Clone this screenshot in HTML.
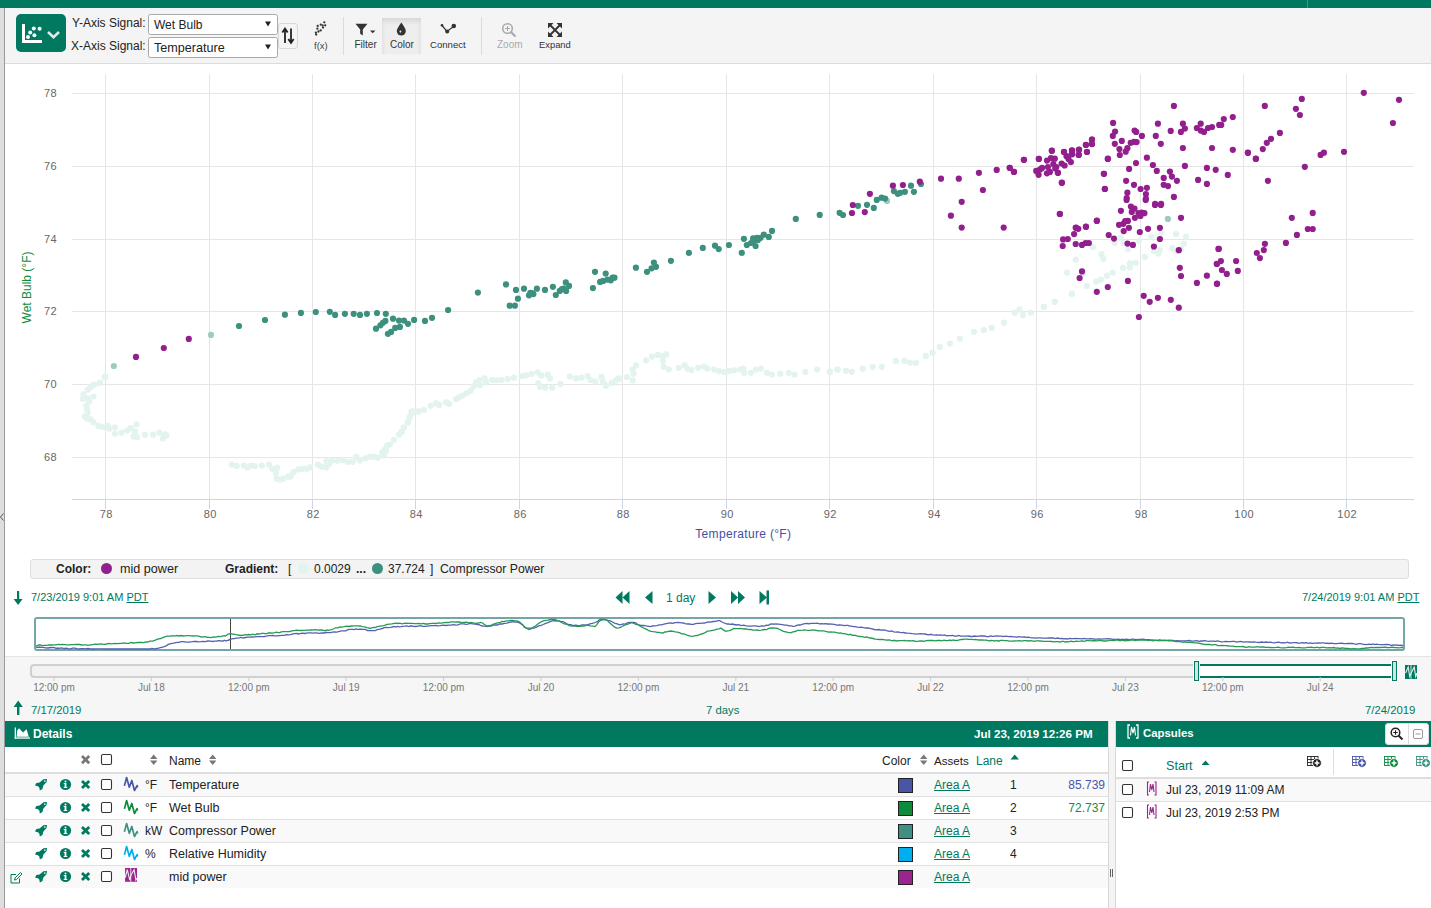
<!DOCTYPE html>
<html><head><meta charset="utf-8">
<style>
*{box-sizing:border-box;margin:0;padding:0}
html,body{width:1431px;height:908px;overflow:hidden;background:#fff;font-family:"Liberation Sans",sans-serif;color:#222}
.a{position:absolute}
.t{position:absolute;white-space:nowrap;line-height:1}
svg{overflow:visible}
</style></head><body>
<!-- top bar -->
<div class="a" style="left:0;top:0;width:1431px;height:8px;background:#007960"></div>
<div class="a" style="left:1307px;top:0;width:1px;height:8px;background:#3a9a84"></div>
<!-- toolbar -->
<div class="a" style="left:5px;top:8px;width:1426px;height:56px;background:#f4f4f4;border-bottom:1px solid #dcdcdc"></div>
<div class="a" style="left:16px;top:14px;width:50px;height:38px;background:#007960;border-radius:5px"></div>
<div class="a" style="left:382px;top:18px;width:39px;height:36px;background:#eeeeee;box-shadow:inset 0 3px 5px rgba(0,0,0,.10)"></div>
<svg class="a" style="left:0;top:0" width="600" height="64">
 <path d="M23.5 24 V41.5 H42" fill="none" stroke="#fff" stroke-width="3"/>
 <g fill="#fff"><circle cx="28" cy="37" r="2"/><circle cx="30.2" cy="32.6" r="2"/><circle cx="33.8" cy="28.4" r="2"/><circle cx="34.4" cy="35.2" r="2"/><circle cx="39.6" cy="28.8" r="2"/></g>
 <path d="M48 32 L53.5 37.2 L59 32" fill="none" stroke="#e6e6e6" stroke-width="2.6"/>
 <!-- selects -->
 <rect x="148.5" y="14.5" width="129" height="20" rx="2" fill="#fff" stroke="#a9a9a9"/>
 <rect x="148.5" y="37.5" width="129" height="20" rx="2" fill="#fff" stroke="#a9a9a9"/>
 <path d="M265 21.5 H271 L268 26.5 Z M265 44.5 H271 L268 49.5 Z" fill="#222"/>
 <!-- swap button -->
 <rect x="278.5" y="23.5" width="19" height="25" rx="2.5" fill="#f4f4f4" stroke="#d8d8d8"/>
 <path d="M285 43 V30 M282.3 32.5 L285 28.6 L287.7 32.5 M291 28.5 V41.5 M288.3 39 L291 42.9 L293.7 39" fill="none" stroke="#222" stroke-width="1.8"/>
 <!-- fx scatter icon -->
 <g fill="#333"><circle cx="317.7" cy="25.9" r="1.15"/><circle cx="317.4" cy="28.7" r="1.15"/><circle cx="315.9" cy="32.6" r="1.15"/><circle cx="320.7" cy="24.6" r="1.15"/><circle cx="322.6" cy="25.5" r="1.15"/><circle cx="325.2" cy="25.3" r="1.15"/><circle cx="324.3" cy="22.3" r="1.15"/><circle cx="323" cy="27.6" r="1.15"/><circle cx="320.7" cy="30.4" r="1.15"/><circle cx="318.5" cy="31.5" r="1.15"/><circle cx="316.2" cy="34.5" r="1.15"/></g>
 <!-- separators -->
 <line x1="343.5" y1="17" x2="343.5" y2="55" stroke="#dcdcdc"/>
 <line x1="481.5" y1="17" x2="481.5" y2="55" stroke="#dcdcdc"/>
 <!-- color active bg -->
 <!-- filter -->
 <path d="M355.5 23.8 H367.5 L362.8 29.5 V35.5 L360.2 33.8 V29.5 Z" fill="#333"/>
 <path d="M370 30.5 H375.4 L372.7 33.2 Z" fill="#333"/>
 <!-- drop -->
 <path d="M401.3 22.6 C401.3 22.6 396.8 28.5 396.8 31 A4.5 4.5 0 0 0 405.8 31 C405.8 28.5 401.3 22.6 401.3 22.6 Z" fill="#333"/>
 <ellipse cx="400.4" cy="31.6" rx="0.9" ry="1.1" fill="#f0f0f0"/>
 <!-- connect -->
 <path d="M442 25.5 L447 31.5 L453.5 26.5" fill="none" stroke="#333" stroke-width="1.2"/>
 <circle cx="442" cy="25.3" r="1.3" fill="#333"/><circle cx="447.2" cy="31.5" r="2" fill="#333"/><circle cx="453.8" cy="26" r="2.3" fill="#333"/>
 <!-- zoom -->
 <circle cx="507.5" cy="28.5" r="4.8" fill="none" stroke="#aaa" stroke-width="1.6"/>
 <path d="M511 32 L515.5 36.5" stroke="#aaa" stroke-width="2.2"/>
 <path d="M505 28.5 H510 M507.5 26 V31" stroke="#aaa" stroke-width="1.1"/>
 <!-- expand -->
 <path d="M549.5 24.5 L560.5 35.5 M560.5 24.5 L549.5 35.5" stroke="#333" stroke-width="1.8"/>
 <path d="M548 23 H553.5 L548 28.5 Z M562 23 H556.5 L562 28.5 Z M548 37 H553.5 L548 31.5 Z M562 37 H556.5 L562 31.5 Z" fill="#333"/>
</svg>
<div class="t" style="left:72px;top:17px;font-size:12px;color:#222">Y-Axis Signal:</div>
<div class="t" style="left:71px;top:40px;font-size:12px;color:#222">X-Axis Signal:</div>
<div class="t" style="left:154px;top:19px;font-size:12px;color:#222">Wet Bulb</div>
<div class="t" style="left:154px;top:42px;font-size:12.6px;color:#222">Temperature</div>
<div class="t" style="left:314px;top:41px;font-size:9.5px;color:#444">f(x)</div>
<div class="t" style="left:354.5px;top:40px;font-size:10px;color:#333">Filter</div>
<div class="t" style="left:390px;top:40px;font-size:10px;color:#333">Color</div>
<div class="t" style="left:430px;top:40px;font-size:9.6px;color:#333">Connect</div>
<div class="t" style="left:497px;top:40px;font-size:10px;color:#aaa">Zoom</div>
<div class="t" style="left:539px;top:40px;font-size:9.4px;color:#333">Expand</div>

<svg class="a" style="left:0;top:0" width="1431" height="560" font-family="Liberation Sans, sans-serif"><line x1="105.5" y1="74" x2="105.5" y2="499" stroke="#e6e6e6" stroke-width="1"/><line x1="209.5" y1="74" x2="209.5" y2="499" stroke="#e6e6e6" stroke-width="1"/><line x1="312.5" y1="74" x2="312.5" y2="499" stroke="#e6e6e6" stroke-width="1"/><line x1="415.5" y1="74" x2="415.5" y2="499" stroke="#e6e6e6" stroke-width="1"/><line x1="519.5" y1="74" x2="519.5" y2="499" stroke="#e6e6e6" stroke-width="1"/><line x1="622.5" y1="74" x2="622.5" y2="499" stroke="#e6e6e6" stroke-width="1"/><line x1="726.5" y1="74" x2="726.5" y2="499" stroke="#e6e6e6" stroke-width="1"/><line x1="829.5" y1="74" x2="829.5" y2="499" stroke="#e6e6e6" stroke-width="1"/><line x1="933.5" y1="74" x2="933.5" y2="499" stroke="#e6e6e6" stroke-width="1"/><line x1="1036.5" y1="74" x2="1036.5" y2="499" stroke="#e6e6e6" stroke-width="1"/><line x1="1140.5" y1="74" x2="1140.5" y2="499" stroke="#e6e6e6" stroke-width="1"/><line x1="1243.5" y1="74" x2="1243.5" y2="499" stroke="#e6e6e6" stroke-width="1"/><line x1="1346.5" y1="74" x2="1346.5" y2="499" stroke="#e6e6e6" stroke-width="1"/><line x1="72" y1="93.5" x2="1414" y2="93.5" stroke="#e6e6e6" stroke-width="1"/><line x1="72" y1="166.5" x2="1414" y2="166.5" stroke="#e6e6e6" stroke-width="1"/><line x1="72" y1="239.5" x2="1414" y2="239.5" stroke="#e6e6e6" stroke-width="1"/><line x1="72" y1="311.5" x2="1414" y2="311.5" stroke="#e6e6e6" stroke-width="1"/><line x1="72" y1="384.5" x2="1414" y2="384.5" stroke="#e6e6e6" stroke-width="1"/><line x1="72" y1="457.5" x2="1414" y2="457.5" stroke="#e6e6e6" stroke-width="1"/><line x1="72" y1="499.5" x2="1414" y2="499.5" stroke="#ccd6eb" stroke-width="1"/><line x1="105.5" y1="499" x2="105.5" y2="509" stroke="#ccd6eb" stroke-width="1"/><line x1="209.5" y1="499" x2="209.5" y2="509" stroke="#ccd6eb" stroke-width="1"/><line x1="312.5" y1="499" x2="312.5" y2="509" stroke="#ccd6eb" stroke-width="1"/><line x1="415.5" y1="499" x2="415.5" y2="509" stroke="#ccd6eb" stroke-width="1"/><line x1="519.5" y1="499" x2="519.5" y2="509" stroke="#ccd6eb" stroke-width="1"/><line x1="622.5" y1="499" x2="622.5" y2="509" stroke="#ccd6eb" stroke-width="1"/><line x1="726.5" y1="499" x2="726.5" y2="509" stroke="#ccd6eb" stroke-width="1"/><line x1="829.5" y1="499" x2="829.5" y2="509" stroke="#ccd6eb" stroke-width="1"/><line x1="933.5" y1="499" x2="933.5" y2="509" stroke="#ccd6eb" stroke-width="1"/><line x1="1036.5" y1="499" x2="1036.5" y2="509" stroke="#ccd6eb" stroke-width="1"/><line x1="1140.5" y1="499" x2="1140.5" y2="509" stroke="#ccd6eb" stroke-width="1"/><line x1="1243.5" y1="499" x2="1243.5" y2="509" stroke="#ccd6eb" stroke-width="1"/><line x1="1346.5" y1="499" x2="1346.5" y2="509" stroke="#ccd6eb" stroke-width="1"/><text x="106.3" y="518" text-anchor="middle" font-size="11" letter-spacing="0.5" fill="#666">78</text><text x="210.3" y="518" text-anchor="middle" font-size="11" letter-spacing="0.5" fill="#666">80</text><text x="313.3" y="518" text-anchor="middle" font-size="11" letter-spacing="0.5" fill="#666">82</text><text x="416.3" y="518" text-anchor="middle" font-size="11" letter-spacing="0.5" fill="#666">84</text><text x="520.3" y="518" text-anchor="middle" font-size="11" letter-spacing="0.5" fill="#666">86</text><text x="623.3" y="518" text-anchor="middle" font-size="11" letter-spacing="0.5" fill="#666">88</text><text x="727.3" y="518" text-anchor="middle" font-size="11" letter-spacing="0.5" fill="#666">90</text><text x="830.3" y="518" text-anchor="middle" font-size="11" letter-spacing="0.5" fill="#666">92</text><text x="934.3" y="518" text-anchor="middle" font-size="11" letter-spacing="0.5" fill="#666">94</text><text x="1037.3" y="518" text-anchor="middle" font-size="11" letter-spacing="0.5" fill="#666">96</text><text x="1141.3" y="518" text-anchor="middle" font-size="11" letter-spacing="0.5" fill="#666">98</text><text x="1244.3" y="518" text-anchor="middle" font-size="11" letter-spacing="0.5" fill="#666">100</text><text x="1347.3" y="518" text-anchor="middle" font-size="11" letter-spacing="0.5" fill="#666">102</text><text x="57.2" y="96.7" text-anchor="end" font-size="11" letter-spacing="0.5" fill="#666">78</text><text x="57.2" y="169.7" text-anchor="end" font-size="11" letter-spacing="0.5" fill="#666">76</text><text x="57.2" y="242.7" text-anchor="end" font-size="11" letter-spacing="0.5" fill="#666">74</text><text x="57.2" y="314.7" text-anchor="end" font-size="11" letter-spacing="0.5" fill="#666">72</text><text x="57.2" y="387.7" text-anchor="end" font-size="11" letter-spacing="0.5" fill="#666">70</text><text x="57.2" y="460.7" text-anchor="end" font-size="11" letter-spacing="0.5" fill="#666">68</text><text x="743.3" y="538" text-anchor="middle" font-size="12" letter-spacing="0.33" fill="#4350a3">Temperature (°F)</text><text transform="translate(31,287.5) rotate(-90)" text-anchor="middle" font-size="12" fill="#0e8a3c">Wet Bulb (°F)</text><g fill="#e3f3ef"><circle cx="104.9" cy="377.2" r="3.1"/><circle cx="99.6" cy="383.0" r="3.1"/><circle cx="93.6" cy="385.0" r="3.1"/><circle cx="104.9" cy="376.9" r="3.1"/><circle cx="99.9" cy="382.6" r="3.1"/><circle cx="93.8" cy="384.6" r="3.1"/><circle cx="90.6" cy="387.2" r="3.1"/><circle cx="87.7" cy="389.8" r="3.1"/><circle cx="83.5" cy="394.4" r="3.1"/><circle cx="82.7" cy="398.7" r="3.1"/><circle cx="87.7" cy="398.0" r="3.1"/><circle cx="93.5" cy="396.5" r="3.1"/><circle cx="89.2" cy="401.5" r="3.1"/><circle cx="86.3" cy="405.8" r="3.1"/><circle cx="87.0" cy="409.4" r="3.1"/><circle cx="87.7" cy="413.0" r="3.1"/><circle cx="84.9" cy="416.5" r="3.1"/><circle cx="87.0" cy="418.7" r="3.1"/><circle cx="90.6" cy="419.4" r="3.1"/><circle cx="93.5" cy="422.3" r="3.1"/><circle cx="98.5" cy="425.9" r="3.1"/><circle cx="102.8" cy="427.0" r="3.1"/><circle cx="107.8" cy="425.9" r="3.1"/><circle cx="109.2" cy="428.7" r="3.1"/><circle cx="115.0" cy="427.3" r="3.1"/><circle cx="115.0" cy="433.7" r="3.1"/><circle cx="121.4" cy="432.7" r="3.1"/><circle cx="127.1" cy="430.6" r="3.1"/><circle cx="130.7" cy="428.0" r="3.1"/><circle cx="136.4" cy="424.4" r="3.1"/><circle cx="135.0" cy="431.6" r="3.1"/><circle cx="133.6" cy="436.6" r="3.1"/><circle cx="137.1" cy="437.0" r="3.1"/><circle cx="145.0" cy="434.7" r="3.1"/><circle cx="152.9" cy="434.7" r="3.1"/><circle cx="159.3" cy="432.7" r="3.1"/><circle cx="165.0" cy="434.4" r="3.1"/><circle cx="162.9" cy="438.5" r="3.1"/><circle cx="166.5" cy="435.6" r="3.1"/><circle cx="231.9" cy="464.6" r="3.1"/><circle cx="236.8" cy="466.0" r="3.1"/><circle cx="243.8" cy="465.5" r="3.1"/><circle cx="247.3" cy="467.4" r="3.1"/><circle cx="251.4" cy="465.5" r="3.1"/><circle cx="254.9" cy="466.0" r="3.1"/><circle cx="261.9" cy="465.5" r="3.1"/><circle cx="268.9" cy="464.6" r="3.1"/><circle cx="272.4" cy="468.8" r="3.1"/><circle cx="277.3" cy="467.8" r="3.1"/><circle cx="275.9" cy="472.9" r="3.1"/><circle cx="276.6" cy="478.5" r="3.1"/><circle cx="280.1" cy="479.5" r="3.1"/><circle cx="283.6" cy="478.5" r="3.1"/><circle cx="288.5" cy="476.4" r="3.1"/><circle cx="290.6" cy="476.4" r="3.1"/><circle cx="293.4" cy="472.2" r="3.1"/><circle cx="298.3" cy="469.4" r="3.1"/><circle cx="302.5" cy="468.8" r="3.1"/><circle cx="306.7" cy="468.8" r="3.1"/><circle cx="310.1" cy="467.4" r="3.1"/><circle cx="317.8" cy="464.6" r="3.1"/><circle cx="321.3" cy="466.7" r="3.1"/><circle cx="326.2" cy="461.1" r="3.1"/><circle cx="326.2" cy="467.4" r="3.1"/><circle cx="329.0" cy="463.9" r="3.1"/><circle cx="331.8" cy="460.4" r="3.1"/><circle cx="337.4" cy="460.8" r="3.1"/><circle cx="343.0" cy="459.9" r="3.1"/><circle cx="347.9" cy="461.8" r="3.1"/><circle cx="352.8" cy="461.8" r="3.1"/><circle cx="356.3" cy="456.9" r="3.1"/><circle cx="359.8" cy="460.4" r="3.1"/><circle cx="365.4" cy="458.3" r="3.1"/><circle cx="369.5" cy="456.9" r="3.1"/><circle cx="373.7" cy="456.6" r="3.1"/><circle cx="377.9" cy="457.6" r="3.1"/><circle cx="382.1" cy="452.7" r="3.1"/><circle cx="384.9" cy="449.9" r="3.1"/><circle cx="387.0" cy="445.7" r="3.1"/><circle cx="389.8" cy="444.6" r="3.1"/><circle cx="394.0" cy="439.8" r="3.1"/><circle cx="398.9" cy="434.5" r="3.1"/><circle cx="401.7" cy="431.7" r="3.1"/><circle cx="403.8" cy="427.5" r="3.1"/><circle cx="408.0" cy="422.6" r="3.1"/><circle cx="409.4" cy="417.7" r="3.1"/><circle cx="411.5" cy="413.5" r="3.1"/><circle cx="412.9" cy="411.4" r="3.1"/><circle cx="418.5" cy="411.4" r="3.1"/><circle cx="383.5" cy="455.5" r="3.1"/><circle cx="386.0" cy="451.0" r="3.1"/><circle cx="401.5" cy="432.2" r="3.1"/><circle cx="403.8" cy="427.6" r="3.1"/><circle cx="407.7" cy="422.2" r="3.1"/><circle cx="410.0" cy="416.9" r="3.1"/><circle cx="411.5" cy="411.5" r="3.1"/><circle cx="418.4" cy="411.5" r="3.1"/><circle cx="423.8" cy="410.0" r="3.1"/><circle cx="430.7" cy="405.8" r="3.1"/><circle cx="436.1" cy="403.3" r="3.1"/><circle cx="439.2" cy="404.9" r="3.1"/><circle cx="446.1" cy="402.3" r="3.1"/><circle cx="449.2" cy="403.8" r="3.1"/><circle cx="456.1" cy="399.2" r="3.1"/><circle cx="459.2" cy="397.2" r="3.1"/><circle cx="463.0" cy="395.3" r="3.1"/><circle cx="466.9" cy="393.0" r="3.1"/><circle cx="470.7" cy="390.7" r="3.1"/><circle cx="473.8" cy="386.1" r="3.1"/><circle cx="476.1" cy="382.3" r="3.1"/><circle cx="479.9" cy="380.0" r="3.1"/><circle cx="484.6" cy="378.4" r="3.1"/><circle cx="479.9" cy="385.3" r="3.1"/><circle cx="486.1" cy="382.3" r="3.1"/><circle cx="492.2" cy="380.0" r="3.1"/><circle cx="496.8" cy="380.3" r="3.1"/><circle cx="501.5" cy="380.0" r="3.1"/><circle cx="507.6" cy="379.2" r="3.1"/><circle cx="513.8" cy="377.7" r="3.1"/><circle cx="521.4" cy="376.1" r="3.1"/><circle cx="526.1" cy="375.4" r="3.1"/><circle cx="531.4" cy="374.1" r="3.1"/><circle cx="537.6" cy="372.3" r="3.1"/><circle cx="541.4" cy="375.4" r="3.1"/><circle cx="547.6" cy="374.6" r="3.1"/><circle cx="549.9" cy="378.4" r="3.1"/><circle cx="538.4" cy="383.0" r="3.1"/><circle cx="539.9" cy="386.9" r="3.1"/><circle cx="545.3" cy="387.7" r="3.1"/><circle cx="552.2" cy="387.7" r="3.1"/><circle cx="560.6" cy="383.8" r="3.1"/><circle cx="569.9" cy="376.6" r="3.1"/><circle cx="576.0" cy="378.4" r="3.1"/><circle cx="581.4" cy="377.7" r="3.1"/><circle cx="587.6" cy="376.1" r="3.1"/><circle cx="590.6" cy="380.0" r="3.1"/><circle cx="595.2" cy="381.5" r="3.1"/><circle cx="601.4" cy="376.9" r="3.1"/><circle cx="602.9" cy="381.5" r="3.1"/><circle cx="606.0" cy="385.8" r="3.1"/><circle cx="612.1" cy="382.7" r="3.1"/><circle cx="618.3" cy="378.4" r="3.1"/><circle cx="601.7" cy="377.0" r="3.1"/><circle cx="605.9" cy="385.4" r="3.1"/><circle cx="611.7" cy="382.9" r="3.1"/><circle cx="615.9" cy="380.4" r="3.1"/><circle cx="620.1" cy="378.7" r="3.1"/><circle cx="626.8" cy="377.0" r="3.1"/><circle cx="632.7" cy="380.4" r="3.1"/><circle cx="633.5" cy="373.7" r="3.1"/><circle cx="632.7" cy="369.5" r="3.1"/><circle cx="636.1" cy="365.3" r="3.1"/><circle cx="646.1" cy="360.3" r="3.1"/><circle cx="652.0" cy="356.6" r="3.1"/><circle cx="657.9" cy="354.9" r="3.1"/><circle cx="662.9" cy="356.1" r="3.1"/><circle cx="666.2" cy="354.4" r="3.1"/><circle cx="662.9" cy="361.1" r="3.1"/><circle cx="663.7" cy="367.0" r="3.1"/><circle cx="668.8" cy="369.5" r="3.1"/><circle cx="678.8" cy="367.8" r="3.1"/><circle cx="684.7" cy="365.3" r="3.1"/><circle cx="687.2" cy="368.6" r="3.1"/><circle cx="691.4" cy="370.0" r="3.1"/><circle cx="698.1" cy="367.8" r="3.1"/><circle cx="704.0" cy="366.6" r="3.1"/><circle cx="707.3" cy="368.6" r="3.1"/><circle cx="714.0" cy="369.5" r="3.1"/><circle cx="719.1" cy="371.2" r="3.1"/><circle cx="724.1" cy="372.0" r="3.1"/><circle cx="729.1" cy="371.2" r="3.1"/><circle cx="734.2" cy="370.3" r="3.1"/><circle cx="740.0" cy="369.5" r="3.1"/><circle cx="743.4" cy="368.6" r="3.1"/><circle cx="744.2" cy="372.8" r="3.1"/><circle cx="751.0" cy="372.8" r="3.1"/><circle cx="756.0" cy="369.5" r="3.1"/><circle cx="761.0" cy="368.6" r="3.1"/><circle cx="766.9" cy="372.8" r="3.1"/><circle cx="771.9" cy="374.5" r="3.1"/><circle cx="780.3" cy="373.7" r="3.1"/><circle cx="788.7" cy="372.8" r="3.1"/><circle cx="794.5" cy="374.5" r="3.1"/><circle cx="805.4" cy="372.0" r="3.1"/><circle cx="817.2" cy="369.5" r="3.1"/><circle cx="829.8" cy="371.7" r="3.1"/><circle cx="837.3" cy="369.5" r="3.1"/><circle cx="830.0" cy="371.8" r="3.1"/><circle cx="837.8" cy="369.6" r="3.1"/><circle cx="846.0" cy="370.8" r="3.1"/><circle cx="851.8" cy="371.8" r="3.1"/><circle cx="862.7" cy="368.7" r="3.1"/><circle cx="872.7" cy="366.8" r="3.1"/><circle cx="881.8" cy="366.8" r="3.1"/><circle cx="895.9" cy="360.9" r="3.1"/><circle cx="904.5" cy="360.9" r="3.1"/><circle cx="909.9" cy="362.7" r="3.1"/><circle cx="915.9" cy="362.8" r="3.1"/><circle cx="925.9" cy="355.9" r="3.1"/><circle cx="932.6" cy="352.7" r="3.1"/><circle cx="939.9" cy="346.9" r="3.1"/><circle cx="949.9" cy="343.6" r="3.1"/><circle cx="959.9" cy="338.7" r="3.1"/><circle cx="973.9" cy="331.8" r="3.1"/><circle cx="983.9" cy="330.0" r="3.1"/><circle cx="991.7" cy="327.8" r="3.1"/><circle cx="1003.9" cy="322.7" r="3.1"/><circle cx="1014.8" cy="312.7" r="3.1"/><circle cx="1019.5" cy="309.4" r="3.1"/><circle cx="1022.9" cy="314.9" r="3.1"/><circle cx="1030.8" cy="312.7" r="3.1"/><circle cx="1043.8" cy="306.9" r="3.1"/><circle cx="1054.9" cy="301.8" r="3.1"/><circle cx="1072.0" cy="293.6" r="3.1"/><circle cx="1044.0" cy="306.8" r="3.1"/><circle cx="1054.8" cy="301.8" r="3.1"/><circle cx="1071.7" cy="293.8" r="3.1"/><circle cx="1086.9" cy="285.9" r="3.1"/><circle cx="1096.2" cy="281.7" r="3.1"/><circle cx="1100.8" cy="279.7" r="3.1"/><circle cx="1107.0" cy="275.7" r="3.1"/><circle cx="1112.7" cy="272.7" r="3.1"/><circle cx="1123.0" cy="267.8" r="3.1"/><circle cx="1129.9" cy="267.4" r="3.1"/><circle cx="1129.9" cy="263.4" r="3.1"/><circle cx="1135.8" cy="262.8" r="3.1"/><circle cx="1144.8" cy="256.8" r="3.1"/><circle cx="1153.7" cy="250.9" r="3.1"/><circle cx="1158.3" cy="253.5" r="3.1"/><circle cx="1159.6" cy="250.2" r="3.1"/><circle cx="1172.2" cy="248.2" r="3.1"/><circle cx="1176.1" cy="250.9" r="3.1"/><circle cx="1181.4" cy="248.9" r="3.1"/><circle cx="1184.0" cy="243.6" r="3.1"/><circle cx="1186.0" cy="236.7" r="3.1"/><circle cx="1176.1" cy="234.1" r="3.1"/><circle cx="1160.9" cy="233.0" r="3.1"/><circle cx="1151.0" cy="236.7" r="3.1"/><circle cx="1138.9" cy="241.0" r="3.1"/><circle cx="1127.9" cy="248.9" r="3.1"/><circle cx="1123.3" cy="243.0" r="3.1"/><circle cx="1120.6" cy="237.7" r="3.1"/><circle cx="1114.7" cy="243.0" r="3.1"/><circle cx="1092.9" cy="246.9" r="3.1"/><circle cx="1101.5" cy="254.2" r="3.1"/><circle cx="1103.4" cy="258.8" r="3.1"/><circle cx="1075.7" cy="259.7" r="3.1"/><circle cx="1067.1" cy="272.7" r="3.1"/><circle cx="1083.0" cy="273.7" r="3.1"/></g><g fill="#9fcbbf"><circle cx="113.8" cy="366.0" r="3.1"/><circle cx="211.0" cy="334.9" r="3.1"/><circle cx="887.0" cy="200.9" r="3.1"/><circle cx="1167.9" cy="218.9" r="3.1"/></g><g fill="#3d907d"><circle cx="239.0" cy="326.0" r="3.1"/><circle cx="265.0" cy="320.0" r="3.1"/><circle cx="284.9" cy="314.7" r="3.1"/><circle cx="300.9" cy="312.9" r="3.1"/><circle cx="315.8" cy="312.0" r="3.1"/><circle cx="329.8" cy="311.8" r="3.1"/><circle cx="335.1" cy="314.9" r="3.1"/><circle cx="344.9" cy="313.8" r="3.1"/><circle cx="353.7" cy="313.8" r="3.1"/><circle cx="360.0" cy="314.9" r="3.1"/><circle cx="366.9" cy="313.8" r="3.1"/><circle cx="377.0" cy="313.0" r="3.1"/><circle cx="385.8" cy="313.8" r="3.1"/><circle cx="393.0" cy="318.7" r="3.1"/><circle cx="385.4" cy="320.9" r="3.1"/><circle cx="382.9" cy="322.8" r="3.1"/><circle cx="380.4" cy="325.3" r="3.1"/><circle cx="376.0" cy="328.7" r="3.1"/><circle cx="387.9" cy="333.8" r="3.1"/><circle cx="391.1" cy="331.9" r="3.1"/><circle cx="395.2" cy="327.9" r="3.1"/><circle cx="399.9" cy="326.9" r="3.1"/><circle cx="399.0" cy="320.6" r="3.1"/><circle cx="404.0" cy="320.6" r="3.1"/><circle cx="408.0" cy="323.8" r="3.1"/><circle cx="414.1" cy="319.9" r="3.1"/><circle cx="425.0" cy="320.9" r="3.1"/><circle cx="432.0" cy="317.8" r="3.1"/><circle cx="448.1" cy="310.0" r="3.1"/><circle cx="477.9" cy="292.6" r="3.1"/><circle cx="506.0" cy="284.4" r="3.1"/><circle cx="516.0" cy="289.9" r="3.1"/><circle cx="517.9" cy="298.7" r="3.1"/><circle cx="509.7" cy="305.7" r="3.1"/><circle cx="514.9" cy="305.7" r="3.1"/><circle cx="524.0" cy="288.7" r="3.1"/><circle cx="529.0" cy="295.3" r="3.1"/><circle cx="530.3" cy="292.8" r="3.1"/><circle cx="533.4" cy="294.1" r="3.1"/><circle cx="536.9" cy="288.7" r="3.1"/><circle cx="545.0" cy="289.9" r="3.1"/><circle cx="552.9" cy="286.8" r="3.1"/><circle cx="555.8" cy="295.0" r="3.1"/><circle cx="559.8" cy="290.9" r="3.1"/><circle cx="563.6" cy="288.7" r="3.1"/><circle cx="566.1" cy="290.9" r="3.1"/><circle cx="565.8" cy="282.4" r="3.1"/><circle cx="569.0" cy="285.9" r="3.1"/><circle cx="595.0" cy="271.8" r="3.1"/><circle cx="592.9" cy="288.1" r="3.1"/><circle cx="600.1" cy="281.9" r="3.1"/><circle cx="603.2" cy="280.9" r="3.1"/><circle cx="605.7" cy="273.6" r="3.1"/><circle cx="607.6" cy="279.6" r="3.1"/><circle cx="610.8" cy="280.3" r="3.1"/><circle cx="612.6" cy="277.7" r="3.1"/><circle cx="614.5" cy="277.7" r="3.1"/><circle cx="635.9" cy="267.7" r="3.1"/><circle cx="647.0" cy="271.8" r="3.1"/><circle cx="651.6" cy="268.3" r="3.1"/><circle cx="653.9" cy="262.6" r="3.1"/><circle cx="656.0" cy="266.8" r="3.1"/><circle cx="670.9" cy="260.8" r="3.1"/><circle cx="562.0" cy="289.0" r="3.1"/><circle cx="532.0" cy="293.0" r="3.1"/><circle cx="688.9" cy="252.9" r="3.1"/><circle cx="702.8" cy="247.9" r="3.1"/><circle cx="715.0" cy="245.7" r="3.1"/><circle cx="718.7" cy="249.1" r="3.1"/><circle cx="728.9" cy="245.0" r="3.1"/><circle cx="743.9" cy="238.8" r="3.1"/><circle cx="741.8" cy="252.9" r="3.1"/><circle cx="746.8" cy="245.0" r="3.1"/><circle cx="753.1" cy="238.4" r="3.1"/><circle cx="753.7" cy="241.6" r="3.1"/><circle cx="755.6" cy="246.0" r="3.1"/><circle cx="756.9" cy="237.8" r="3.1"/><circle cx="760.6" cy="237.8" r="3.1"/><circle cx="763.8" cy="234.7" r="3.1"/><circle cx="768.8" cy="236.9" r="3.1"/><circle cx="772.0" cy="230.9" r="3.1"/><circle cx="795.8" cy="218.9" r="3.1"/><circle cx="819.7" cy="214.9" r="3.1"/><circle cx="751.0" cy="243.0" r="3.1"/><circle cx="758.0" cy="240.0" r="3.1"/><circle cx="839.6" cy="212.8" r="3.1"/><circle cx="843.0" cy="215.0" r="3.1"/><circle cx="858.0" cy="205.8" r="3.1"/><circle cx="867.0" cy="204.8" r="3.1"/><circle cx="873.8" cy="207.9" r="3.1"/><circle cx="876.8" cy="199.9" r="3.1"/><circle cx="881.6" cy="197.7" r="3.1"/><circle cx="885.1" cy="198.6" r="3.1"/><circle cx="893.9" cy="191.1" r="3.1"/><circle cx="897.8" cy="193.8" r="3.1"/><circle cx="900.2" cy="192.8" r="3.1"/><circle cx="904.9" cy="191.8" r="3.1"/><circle cx="911.0" cy="185.7" r="3.1"/><circle cx="913.9" cy="191.8" r="3.1"/><circle cx="921.0" cy="184.0" r="3.1"/></g><g fill="#921f8d"><circle cx="136.0" cy="356.9" r="3.1"/><circle cx="163.8" cy="348.0" r="3.1"/><circle cx="188.8" cy="338.9" r="3.1"/><circle cx="852.8" cy="205.0" r="3.1"/><circle cx="852.0" cy="213.0" r="3.1"/><circle cx="864.8" cy="212.1" r="3.1"/><circle cx="869.9" cy="193.8" r="3.1"/><circle cx="892.9" cy="185.7" r="3.1"/><circle cx="902.9" cy="185.0" r="3.1"/><circle cx="919.8" cy="181.7" r="3.1"/><circle cx="941.0" cy="178.7" r="3.1"/><circle cx="958.8" cy="178.7" r="3.1"/><circle cx="978.9" cy="172.8" r="3.1"/><circle cx="982.9" cy="190.0" r="3.1"/><circle cx="961.7" cy="201.8" r="3.1"/><circle cx="950.9" cy="215.7" r="3.1"/><circle cx="961.7" cy="227.6" r="3.1"/><circle cx="1003.7" cy="227.6" r="3.1"/><circle cx="996.7" cy="169.9" r="3.1"/><circle cx="1009.7" cy="167.8" r="3.1"/><circle cx="1013.9" cy="171.8" r="3.1"/><circle cx="1023.8" cy="159.8" r="3.1"/><circle cx="1038.8" cy="158.9" r="3.1"/><circle cx="1051.8" cy="150.7" r="3.1"/><circle cx="1063.9" cy="152.0" r="3.1"/><circle cx="1072.1" cy="150.7" r="3.1"/><circle cx="1072.1" cy="154.3" r="3.1"/><circle cx="1079.1" cy="149.6" r="3.1"/><circle cx="1078.7" cy="154.9" r="3.1"/><circle cx="1085.9" cy="144.8" r="3.1"/><circle cx="1091.9" cy="139.7" r="3.1"/><circle cx="1091.9" cy="144.1" r="3.1"/><circle cx="1087.0" cy="152.0" r="3.1"/><circle cx="1107.7" cy="158.9" r="3.1"/><circle cx="1103.8" cy="173.8" r="3.1"/><circle cx="1104.8" cy="188.9" r="3.1"/><circle cx="1096.9" cy="220.7" r="3.1"/><circle cx="1085.9" cy="226.7" r="3.1"/><circle cx="1076.0" cy="227.6" r="3.1"/><circle cx="1059.9" cy="214.0" r="3.1"/><circle cx="1061.9" cy="182.7" r="3.1"/><circle cx="1057.9" cy="172.8" r="3.1"/><circle cx="1009.8" cy="167.9" r="3.1"/><circle cx="1014.0" cy="171.9" r="3.1"/><circle cx="1024.0" cy="159.8" r="3.1"/><circle cx="1038.9" cy="158.8" r="3.1"/><circle cx="1051.9" cy="150.8" r="3.1"/><circle cx="1036.2" cy="170.9" r="3.1"/><circle cx="1038.6" cy="174.8" r="3.1"/><circle cx="1040.1" cy="169.4" r="3.1"/><circle cx="1042.1" cy="167.9" r="3.1"/><circle cx="1047.0" cy="173.3" r="3.1"/><circle cx="1049.9" cy="171.9" r="3.1"/><circle cx="1047.9" cy="167.0" r="3.1"/><circle cx="1047.0" cy="160.6" r="3.1"/><circle cx="1050.9" cy="158.2" r="3.1"/><circle cx="1054.8" cy="158.7" r="3.1"/><circle cx="1053.3" cy="164.0" r="3.1"/><circle cx="1056.3" cy="167.0" r="3.1"/><circle cx="1055.3" cy="168.4" r="3.1"/><circle cx="1057.9" cy="172.8" r="3.1"/><circle cx="1061.6" cy="163.5" r="3.1"/><circle cx="1064.6" cy="165.5" r="3.1"/><circle cx="1064.1" cy="151.8" r="3.1"/><circle cx="1066.5" cy="156.2" r="3.1"/><circle cx="1068.5" cy="159.1" r="3.1"/><circle cx="1070.9" cy="162.1" r="3.1"/><circle cx="1071.9" cy="150.3" r="3.1"/><circle cx="1071.9" cy="153.8" r="3.1"/><circle cx="1078.8" cy="149.8" r="3.1"/><circle cx="1078.8" cy="154.7" r="3.1"/><circle cx="1085.9" cy="145.0" r="3.1"/><circle cx="1092.0" cy="139.6" r="3.1"/><circle cx="1092.0" cy="144.0" r="3.1"/><circle cx="1086.9" cy="151.8" r="3.1"/><circle cx="1061.8" cy="182.8" r="3.1"/><circle cx="1059.8" cy="213.9" r="3.1"/><circle cx="1096.8" cy="220.9" r="3.1"/><circle cx="1075.7" cy="227.8" r="3.1"/><circle cx="1078.3" cy="228.8" r="3.1"/><circle cx="1086.0" cy="226.8" r="3.1"/><circle cx="1074.1" cy="234.1" r="3.1"/><circle cx="1063.1" cy="239.4" r="3.1"/><circle cx="1067.8" cy="239.0" r="3.1"/><circle cx="1062.7" cy="246.0" r="3.1"/><circle cx="1075.7" cy="244.0" r="3.1"/><circle cx="1082.0" cy="244.9" r="3.1"/><circle cx="1085.6" cy="243.0" r="3.1"/><circle cx="1088.9" cy="243.0" r="3.1"/><circle cx="1108.7" cy="235.0" r="3.1"/><circle cx="1114.0" cy="238.6" r="3.1"/><circle cx="1120.9" cy="210.8" r="3.1"/><circle cx="1130.9" cy="206.6" r="3.1"/><circle cx="1134.5" cy="208.6" r="3.1"/><circle cx="1131.8" cy="211.9" r="3.1"/><circle cx="1138.5" cy="213.2" r="3.1"/><circle cx="1141.8" cy="212.6" r="3.1"/><circle cx="1144.4" cy="213.2" r="3.1"/><circle cx="1140.4" cy="215.9" r="3.1"/><circle cx="1134.9" cy="217.8" r="3.1"/><circle cx="1119.0" cy="224.8" r="3.1"/><circle cx="1125.2" cy="221.1" r="3.1"/><circle cx="1127.9" cy="220.9" r="3.1"/><circle cx="1123.3" cy="223.8" r="3.1"/><circle cx="1128.9" cy="227.8" r="3.1"/><circle cx="1123.7" cy="231.1" r="3.1"/><circle cx="1139.8" cy="232.0" r="3.1"/><circle cx="1148.0" cy="228.8" r="3.1"/><circle cx="1159.9" cy="227.8" r="3.1"/><circle cx="1155.0" cy="205.0" r="3.1"/><circle cx="1160.9" cy="205.0" r="3.1"/><circle cx="1145.7" cy="200.0" r="3.1"/><circle cx="1126.6" cy="200.0" r="3.1"/><circle cx="1181.0" cy="217.8" r="3.1"/><circle cx="1159.9" cy="239.0" r="3.1"/><circle cx="1127.5" cy="243.6" r="3.1"/><circle cx="1132.9" cy="244.9" r="3.1"/><circle cx="1153.9" cy="246.5" r="3.1"/><circle cx="1178.8" cy="250.2" r="3.1"/><circle cx="1082.0" cy="271.4" r="3.1"/><circle cx="1079.6" cy="278.0" r="3.1"/><circle cx="1127.9" cy="280.9" r="3.1"/><circle cx="1107.8" cy="287.0" r="3.1"/><circle cx="1096.8" cy="291.8" r="3.1"/><circle cx="1143.7" cy="295.8" r="3.1"/><circle cx="1149.7" cy="301.8" r="3.1"/><circle cx="1157.9" cy="297.8" r="3.1"/><circle cx="1170.8" cy="299.8" r="3.1"/><circle cx="1178.8" cy="307.7" r="3.1"/><circle cx="1138.9" cy="317.0" r="3.1"/><circle cx="1179.8" cy="267.8" r="3.1"/><circle cx="1181.0" cy="276.0" r="3.1"/><circle cx="1196.9" cy="282.9" r="3.1"/><circle cx="1206.9" cy="275.7" r="3.1"/><circle cx="1217.1" cy="283.7" r="3.1"/><circle cx="1216.8" cy="263.8" r="3.1"/><circle cx="1218.4" cy="248.9" r="3.1"/><circle cx="1173.9" cy="105.9" r="3.1"/><circle cx="1264.8" cy="105.9" r="3.1"/><circle cx="1113.1" cy="122.9" r="3.1"/><circle cx="1115.1" cy="131.6" r="3.1"/><circle cx="1112.8" cy="135.9" r="3.1"/><circle cx="1114.8" cy="143.8" r="3.1"/><circle cx="1121.8" cy="140.9" r="3.1"/><circle cx="1119.4" cy="149.1" r="3.1"/><circle cx="1119.8" cy="155.0" r="3.1"/><circle cx="1108.0" cy="158.7" r="3.1"/><circle cx="1104.0" cy="173.8" r="3.1"/><circle cx="1104.9" cy="189.0" r="3.1"/><circle cx="1125.7" cy="151.7" r="3.1"/><circle cx="1127.4" cy="148.2" r="3.1"/><circle cx="1130.7" cy="142.8" r="3.1"/><circle cx="1134.0" cy="141.8" r="3.1"/><circle cx="1136.6" cy="142.1" r="3.1"/><circle cx="1134.6" cy="130.6" r="3.1"/><circle cx="1136.2" cy="131.9" r="3.1"/><circle cx="1141.9" cy="135.9" r="3.1"/><circle cx="1129.1" cy="168.9" r="3.1"/><circle cx="1136.0" cy="163.0" r="3.1"/><circle cx="1126.1" cy="180.8" r="3.1"/><circle cx="1134.0" cy="184.8" r="3.1"/><circle cx="1127.4" cy="192.7" r="3.1"/><circle cx="1126.7" cy="198.0" r="3.1"/><circle cx="1140.6" cy="189.0" r="3.1"/><circle cx="1146.9" cy="187.8" r="3.1"/><circle cx="1145.9" cy="194.0" r="3.1"/><circle cx="1145.9" cy="198.7" r="3.1"/><circle cx="1146.9" cy="157.7" r="3.1"/><circle cx="1152.9" cy="165.0" r="3.1"/><circle cx="1156.8" cy="170.9" r="3.1"/><circle cx="1163.7" cy="177.9" r="3.1"/><circle cx="1163.7" cy="184.8" r="3.1"/><circle cx="1168.0" cy="186.1" r="3.1"/><circle cx="1169.9" cy="171.6" r="3.1"/><circle cx="1171.9" cy="176.6" r="3.1"/><circle cx="1176.9" cy="180.8" r="3.1"/><circle cx="1173.9" cy="196.9" r="3.1"/><circle cx="1155.1" cy="203.9" r="3.1"/><circle cx="1161.1" cy="203.9" r="3.1"/><circle cx="1157.9" cy="123.7" r="3.1"/><circle cx="1155.8" cy="135.9" r="3.1"/><circle cx="1160.8" cy="143.8" r="3.1"/><circle cx="1170.7" cy="130.9" r="3.1"/><circle cx="1182.9" cy="123.7" r="3.1"/><circle cx="1184.9" cy="128.6" r="3.1"/><circle cx="1180.9" cy="131.9" r="3.1"/><circle cx="1182.9" cy="148.0" r="3.1"/><circle cx="1184.9" cy="165.9" r="3.1"/><circle cx="1196.8" cy="128.0" r="3.1"/><circle cx="1200.7" cy="123.7" r="3.1"/><circle cx="1200.7" cy="130.6" r="3.1"/><circle cx="1204.0" cy="131.9" r="3.1"/><circle cx="1208.0" cy="128.0" r="3.1"/><circle cx="1212.0" cy="127.0" r="3.1"/><circle cx="1219.2" cy="124.9" r="3.1"/><circle cx="1221.2" cy="124.9" r="3.1"/><circle cx="1223.8" cy="119.1" r="3.1"/><circle cx="1232.8" cy="117.0" r="3.1"/><circle cx="1212.0" cy="148.0" r="3.1"/><circle cx="1232.8" cy="149.8" r="3.1"/><circle cx="1206.9" cy="167.9" r="3.1"/><circle cx="1215.7" cy="169.8" r="3.1"/><circle cx="1227.8" cy="174.9" r="3.1"/><circle cx="1198.1" cy="179.9" r="3.1"/><circle cx="1206.9" cy="183.9" r="3.1"/><circle cx="1247.9" cy="152.8" r="3.1"/><circle cx="1255.8" cy="158.7" r="3.1"/><circle cx="1262.8" cy="149.1" r="3.1"/><circle cx="1266.8" cy="142.8" r="3.1"/><circle cx="1271.0" cy="138.8" r="3.1"/><circle cx="1267.9" cy="180.8" r="3.1"/><circle cx="1301.8" cy="98.9" r="3.1"/><circle cx="1295.9" cy="108.8" r="3.1"/><circle cx="1299.9" cy="115.0" r="3.1"/><circle cx="1279.9" cy="132.9" r="3.1"/><circle cx="1247.9" cy="152.7" r="3.1"/><circle cx="1255.9" cy="158.9" r="3.1"/><circle cx="1304.8" cy="166.8" r="3.1"/><circle cx="1320.6" cy="154.9" r="3.1"/><circle cx="1323.9" cy="152.7" r="3.1"/><circle cx="1344.0" cy="151.8" r="3.1"/><circle cx="1363.8" cy="92.8" r="3.1"/><circle cx="1399.0" cy="99.8" r="3.1"/><circle cx="1392.9" cy="123.0" r="3.1"/><circle cx="1216.9" cy="283.8" r="3.1"/><circle cx="1218.9" cy="248.8" r="3.1"/><circle cx="1220.9" cy="261.1" r="3.1"/><circle cx="1216.9" cy="264.0" r="3.1"/><circle cx="1221.9" cy="270.0" r="3.1"/><circle cx="1226.8" cy="273.9" r="3.1"/><circle cx="1236.1" cy="261.0" r="3.1"/><circle cx="1237.8" cy="270.9" r="3.1"/><circle cx="1264.9" cy="243.8" r="3.1"/><circle cx="1263.8" cy="250.1" r="3.1"/><circle cx="1256.8" cy="253.0" r="3.1"/><circle cx="1259.9" cy="258.1" r="3.1"/><circle cx="1285.9" cy="242.9" r="3.1"/><circle cx="1291.8" cy="217.8" r="3.1"/><circle cx="1296.9" cy="234.9" r="3.1"/><circle cx="1307.8" cy="229.0" r="3.1"/><circle cx="1312.7" cy="229.0" r="3.1"/><circle cx="1312.7" cy="212.9" r="3.1"/></g></svg>

<!-- legend -->
<div class="a" style="left:30px;top:559px;width:1379px;height:20px;background:#f3f3f3;border:1px solid #dedede;border-radius:3px"></div>
<div class="t" style="left:56px;top:563px;font-size:12px;font-weight:bold;color:#222">Color:</div>
<div class="a" style="left:101px;top:563px;width:11px;height:11px;border-radius:50%;background:#921f8d"></div>
<div class="t" style="left:120px;top:563px;font-size:12.6px;color:#222">mid power</div>
<div class="t" style="left:225px;top:563px;font-size:12px;font-weight:bold;color:#222">Gradient:</div>
<div class="t" style="left:288px;top:563px;font-size:12px;color:#222">[</div>
<div class="a" style="left:298px;top:563px;width:11px;height:11px;border-radius:50%;background:#e3f3ef"></div>
<div class="t" style="left:314px;top:563px;font-size:12px;color:#222">0.0029</div>
<div class="t" style="left:356px;top:563px;font-size:12px;font-weight:bold;color:#222">...</div>
<div class="a" style="left:372px;top:563px;width:11px;height:11px;border-radius:50%;background:#3d907d"></div>
<div class="t" style="left:388px;top:563px;font-size:12px;color:#222">37.724</div>
<div class="t" style="left:430px;top:563px;font-size:12px;color:#222">]</div>
<div class="t" style="left:440px;top:563px;font-size:12.2px;color:#222">Compressor Power</div>

<!-- time nav -->
<svg class="a" style="left:0;top:0" width="1431" height="720">
 <path d="M17 591 H19.2 V599 H22.6 L18.1 605 L13.6 599 H17 Z" fill="#007960"/>
 <g fill="#007960">
  <path d="M615.5 597.5 L622.5 591 V604 Z M622.5 597.5 L629.5 591 V604 Z"/>
  <path d="M645 597.5 L652.5 591 V604 Z"/>
  <path d="M716 597.5 L708.5 591 V604 Z"/>
  <path d="M745 597.5 L738 591 V604 Z M738 597.5 L731 591 V604 Z"/>
  <path d="M767 597.5 L759.5 591 V604 Z"/><rect x="766.5" y="590.5" width="2.5" height="14"/>
 </g>
</svg>
<div class="t" style="left:31px;top:592px;font-size:11px;color:#007960">7/23/2019 9:01 AM <span style="text-decoration:underline">PDT</span></div>
<div class="t" style="left:666px;top:592px;font-size:12px;color:#007960">1 day</div>
<div class="t" style="left:1302px;top:592px;font-size:11px;color:#007960">7/24/2019 9:01 AM <span style="text-decoration:underline">PDT</span></div>

<!-- navigator -->
<div class="a" style="left:34px;top:617px;width:1371px;height:34px;border:2px solid #74a5a8;border-radius:3px;background:#fff"></div>
<svg class="a" style="left:0;top:0" width="1431" height="660">
<line x1="230.5" y1="619" x2="230.5" y2="649" stroke="#444" stroke-width="1"/>
<polyline points="36.0,646.7 37.1,647.4 38.3,647.4 39.7,647.0 41.3,647.4 43.2,647.4 45.4,647.8 48.0,648.0 51.0,647.5 54.5,647.6 56.0,648.3 57.5,648.0 59.1,648.4 60.9,647.8 62.7,648.2 64.5,648.5 66.5,648.1 68.5,648.8 70.5,648.9 72.6,648.1 74.7,648.2 76.9,648.7 79.1,649.0 81.3,648.7 83.6,648.6 85.8,648.8 88.0,648.5 90.3,648.8 92.5,649.0 94.8,649.0 97.0,648.9 99.1,648.9 101.3,648.9 103.4,649.0 105.4,649.0 107.5,648.8 109.7,649.0 111.8,649.0 114.1,649.0 116.3,649.0 118.6,649.0 120.8,649.0 123.1,649.0 125.4,649.0 127.7,649.0 129.9,649.0 132.2,649.0 134.4,649.0 136.5,649.0 138.7,649.0 140.7,649.0 142.8,649.0 144.7,649.0 146.6,649.0 148.4,649.0 150.1,649.0 151.7,648.5 153.3,648.6 154.7,649.0 158.5,648.2 161.4,647.3 163.6,646.9 165.4,646.2 166.9,645.4 168.3,644.4 169.9,643.8 171.8,643.3 173.8,643.2 175.6,642.7 177.4,642.3 179.2,642.3 181.1,641.7 183.3,641.7 185.9,642.1 189.0,642.2 190.6,641.8 192.4,641.6 194.3,641.3 196.4,641.5 198.6,641.9 200.8,641.7 203.2,641.4 205.5,641.6 207.9,641.0 210.3,641.2 212.6,641.5 214.8,641.1 217.0,641.0 219.1,640.7 221.0,640.9 222.7,641.2 224.3,640.2 225.6,640.9 229.0,640.2 229.1,639.6 233.0,638.6 234.3,638.6 235.8,638.2 237.5,638.1 239.3,637.8 241.2,637.4 243.3,638.0 245.4,637.5 247.6,637.1 249.9,637.2 252.3,637.0 254.6,636.8 257.0,636.6 259.4,636.7 261.8,636.6 264.1,636.5 266.4,636.2 268.6,635.7 270.7,635.7 272.7,635.5 274.6,635.8 277.0,635.9 279.4,635.6 281.7,635.4 284.0,635.3 286.3,634.6 288.5,634.9 290.7,634.6 292.8,633.9 294.9,633.7 296.9,633.5 298.9,634.0 300.8,633.4 302.7,633.2 304.6,633.5 306.4,633.2 308.7,632.8 310.9,632.8 312.9,633.1 314.8,632.8 316.7,632.9 318.5,633.3 320.3,633.1 322.1,633.0 324.1,633.0 326.2,632.5 328.4,632.7 330.3,632.6 332.3,632.1 334.5,631.8 336.7,632.2 338.9,631.5 341.2,630.9 343.5,630.9 345.8,630.8 348.0,629.7 350.2,629.4 352.3,629.3 354.2,629.6 356.0,628.9 357.7,629.3 360.6,629.2 363.2,629.3 365.4,629.4 367.4,630.5 369.1,630.7 370.8,630.7 372.4,630.6 375.2,630.6 377.2,629.7 380.0,629.2 381.4,628.6 382.6,628.5 383.9,627.7 385.5,627.5 387.6,627.7 390.6,627.3 394.5,626.5 395.9,627.0 397.4,626.4 399.1,626.9 400.9,626.7 402.8,626.3 404.8,626.1 406.8,625.8 409.0,626.6 411.2,625.8 413.4,626.4 415.7,626.5 418.0,626.1 420.3,625.7 422.7,626.3 425.0,626.4 427.3,626.1 429.5,625.9 431.7,625.7 433.9,625.6 436.0,625.5 438.0,625.8 439.9,625.6 441.7,625.3 443.4,625.1 446.1,625.5 448.7,625.1 451.2,625.1 453.6,624.7 455.9,625.1 458.1,624.9 460.2,623.9 462.2,623.9 464.1,623.9 466.0,624.4 467.7,624.1 469.5,623.6 471.1,623.4 472.7,623.9 475.4,624.2 477.5,624.7 479.3,624.7 480.8,625.7 482.6,626.0 484.7,626.2 487.4,626.6 489.1,625.8 491.0,626.0 493.0,625.1 495.2,624.8 497.5,625.0 499.8,624.0 502.2,624.0 504.6,623.4 506.9,623.1 509.1,622.3 511.3,622.0 513.3,621.7 515.1,622.1 516.7,621.9 519.6,622.9 521.5,624.1 523.0,625.1 524.4,627.1 526.3,627.8 529.0,628.2 530.6,628.1 532.4,628.4 534.4,627.8 536.5,627.1 538.7,625.9 541.0,625.3 543.3,624.5 545.6,623.3 547.9,622.7 550.1,621.6 552.2,620.9 554.1,620.6 555.9,621.0 558.5,620.7 560.8,621.5 562.9,621.7 564.9,622.5 566.8,623.8 568.8,624.7 570.8,624.7 573.0,625.7 575.1,625.2 577.3,625.3 579.6,625.9 582.0,624.9 584.3,624.8 586.5,625.2 588.7,624.4 590.7,623.7 592.5,623.4 595.2,622.5 597.3,621.7 599.2,619.8 601.1,619.5 603.5,619.5 605.5,619.6 607.8,620.3 610.2,620.8 612.6,622.0 615.0,623.3 617.3,623.8 619.4,624.8 621.6,624.3 623.6,623.8 625.5,624.1 627.4,622.8 629.4,622.5 631.7,622.3 633.5,622.4 635.4,622.6 637.2,624.0 639.2,624.8 641.3,625.5 643.6,625.3 646.0,625.8 648.8,626.3 650.6,626.6 652.5,626.0 654.6,625.9 656.9,625.6 659.2,624.9 661.5,624.8 663.9,624.2 666.3,623.7 668.6,623.2 670.8,623.0 672.9,623.3 674.8,622.6 676.6,622.6 678.1,622.4 681.6,622.9 683.5,623.0 685.0,623.7 687.9,624.0 689.5,624.0 691.3,624.4 693.4,624.3 695.5,623.6 697.8,623.4 700.1,623.4 702.4,623.2 704.5,623.0 706.6,622.4 708.4,622.0 710.0,622.1 713.4,621.5 715.8,621.4 717.8,620.6 719.8,620.6 721.5,621.7 722.9,622.5 727.1,624.0 728.5,623.9 730.2,624.4 732.1,624.0 734.2,624.5 736.4,625.0 738.8,624.6 741.2,625.6 743.6,625.1 746.1,625.8 748.5,626.2 750.8,626.2 753.1,625.9 755.2,625.8 757.2,626.2 758.9,626.6 761.7,625.9 764.2,626.2 766.4,625.1 768.4,625.3 770.2,624.1 772.1,623.9 774.0,624.2 776.0,624.0 778.2,624.2 780.3,624.4 782.5,624.7 784.7,625.1 786.9,625.1 789.0,625.8 791.1,625.8 793.1,626.4 795.1,626.2 796.8,625.4 798.4,624.8 800.1,625.0 802.1,624.4 804.6,623.7 807.8,623.5 809.3,623.8 810.8,623.4 812.4,623.4 814.0,623.4 815.7,623.3 817.5,623.2 819.3,623.8 821.3,623.7 823.2,623.9 825.3,623.6 827.4,624.0 829.6,623.9 831.9,624.1 834.3,624.4 836.7,625.1 839.2,624.9 841.8,625.2 844.5,625.6 846.2,625.4 847.9,625.4 849.7,626.1 851.5,626.2 853.4,626.6 855.4,626.6 857.3,627.1 859.4,627.4 861.4,627.2 863.5,627.7 865.6,628.0 867.8,628.0 869.9,628.4 872.1,628.9 874.3,629.5 876.5,629.8 878.7,629.5 880.9,630.1 883.0,629.8 885.2,630.1 887.4,630.8 889.5,631.4 891.7,631.0 893.8,631.8 895.8,632.1 897.9,631.8 899.9,632.4 901.8,632.7 903.7,632.5 905.6,633.0 907.9,633.2 910.1,633.3 912.3,633.7 914.5,633.9 916.6,634.1 918.7,633.9 920.8,633.7 922.8,633.9 924.9,634.0 926.9,634.5 928.9,634.8 930.9,634.3 932.8,634.9 934.8,635.1 936.8,634.8 938.7,635.1 940.7,634.8 942.6,635.4 944.6,634.9 946.6,635.8 948.6,635.7 950.6,635.7 952.6,635.4 954.6,636.1 956.6,636.2 958.7,635.5 960.7,636.1 962.7,636.2 964.7,636.1 966.7,636.2 968.6,636.0 970.6,636.5 972.6,636.5 974.6,636.0 976.6,636.4 978.6,636.1 980.6,635.9 982.6,636.0 984.6,635.9 986.6,636.6 988.7,636.7 990.7,635.9 992.8,636.4 994.9,636.2 997.0,636.0 999.2,636.2 1001.3,636.2 1003.5,636.7 1005.4,636.1 1007.3,636.3 1009.1,636.6 1011.0,636.3 1012.9,636.9 1014.8,636.9 1016.7,637.2 1018.6,636.7 1020.5,636.9 1022.4,637.2 1024.4,637.0 1026.3,637.4 1028.3,637.1 1030.2,637.6 1032.2,637.8 1034.2,637.9 1036.2,638.1 1038.3,637.8 1040.3,637.8 1042.4,638.2 1044.5,638.2 1046.6,638.1 1048.8,638.0 1051.0,638.0 1053.2,637.9 1055.4,638.6 1057.7,638.0 1060.0,638.6 1061.8,638.5 1063.7,638.9 1065.6,638.7 1067.5,639.0 1069.5,638.3 1071.5,638.6 1073.6,638.7 1075.6,638.5 1077.7,638.7 1079.8,638.6 1082.0,638.8 1084.1,638.3 1086.3,638.8 1088.4,638.8 1090.6,638.7 1092.8,638.8 1095.0,639.2 1097.2,639.1 1099.4,639.0 1101.5,639.1 1103.7,638.9 1105.9,638.8 1108.0,638.6 1110.1,638.9 1112.2,639.2 1114.3,639.5 1116.4,639.5 1118.4,639.2 1120.4,639.6 1122.4,639.2 1124.3,639.6 1126.2,639.2 1128.1,639.5 1129.9,639.8 1131.7,639.2 1133.4,639.1 1135.9,639.6 1138.3,639.5 1140.5,639.4 1142.7,639.1 1144.8,639.5 1146.8,639.6 1148.7,639.6 1150.6,640.1 1152.5,639.9 1154.3,640.1 1156.1,640.3 1157.9,640.2 1159.6,640.0 1161.4,640.3 1163.3,640.2 1165.1,640.3 1167.0,640.3 1168.9,640.2 1170.9,640.4 1173.0,640.5 1175.2,640.8 1177.4,640.7 1179.8,640.9 1182.3,640.8 1184.0,640.9 1185.8,640.8 1187.6,640.6 1189.4,640.5 1191.2,641.0 1193.1,641.2 1195.0,640.9 1196.9,640.6 1198.9,641.3 1200.9,641.0 1202.9,641.0 1204.9,640.7 1207.0,641.1 1209.0,641.4 1211.1,641.1 1213.2,641.1 1215.3,641.4 1217.4,640.9 1219.5,641.4 1221.7,641.8 1223.8,641.7 1226.0,641.4 1228.1,641.7 1230.3,641.7 1232.4,641.4 1234.6,641.4 1236.7,642.1 1238.8,641.6 1241.0,641.4 1243.1,642.2 1245.2,641.9 1247.3,641.8 1249.4,642.0 1251.5,642.2 1253.6,641.8 1255.6,642.2 1257.6,642.3 1259.7,642.5 1261.8,642.0 1263.9,642.3 1266.0,642.0 1268.1,642.4 1270.2,642.1 1272.4,642.6 1274.5,642.8 1276.7,642.3 1278.8,642.2 1281.0,642.9 1283.1,642.7 1285.3,642.9 1287.4,642.2 1289.6,643.0 1291.7,642.8 1293.8,642.6 1295.9,642.7 1298.1,643.0 1300.1,643.1 1302.2,642.6 1304.3,643.0 1306.3,642.6 1308.4,643.4 1310.4,642.9 1312.4,643.4 1314.3,643.2 1316.3,643.2 1318.2,642.9 1320.1,643.2 1321.9,642.8 1323.7,642.9 1325.5,643.4 1327.3,643.1 1329.0,643.5 1331.5,643.1 1334.0,643.6 1336.4,643.6 1338.8,643.3 1341.2,643.2 1343.5,643.5 1345.8,643.6 1348.0,643.3 1350.2,643.5 1352.3,643.4 1354.4,643.9 1356.5,644.3 1358.5,643.7 1360.5,643.6 1362.4,644.2 1364.3,644.4 1366.1,644.6 1367.9,644.3 1369.7,644.1 1371.4,644.6 1373.1,644.0 1374.7,644.6 1376.3,644.1 1377.9,644.4 1380.9,644.6 1383.8,644.6 1386.4,644.5 1389.0,644.6 1391.3,645.3 1393.5,645.0 1395.5,645.2 1397.4,645.0 1399.0,645.5 1400.5,645.2 1401.9,645.5 1403.0,645.5" fill="none" stroke="#5560b0" stroke-width="1.3"/>
<polyline points="36.0,645.9 37.2,645.9 38.6,645.0 40.4,645.0 42.3,645.6 44.4,645.4 46.6,645.3 48.9,644.8 51.3,645.0 53.8,644.9 56.2,644.8 58.5,644.4 60.8,644.6 62.9,644.5 64.9,644.7 66.7,644.9 69.3,644.9 71.6,644.6 73.7,644.6 75.6,644.5 77.5,644.4 79.4,644.5 81.4,645.0 83.7,644.9 86.2,644.9 88.0,645.3 89.9,644.9 91.8,644.8 93.8,644.4 95.9,644.1 98.0,644.3 100.1,643.9 102.3,644.1 104.5,644.4 106.7,644.0 109.0,643.4 111.2,643.9 113.4,643.7 115.6,643.5 117.7,643.6 119.8,643.4 122.0,643.3 124.2,642.9 126.5,643.4 128.7,643.3 131.0,642.5 133.2,643.0 135.4,642.9 137.6,642.5 139.7,642.5 141.8,642.3 143.8,642.6 145.6,642.0 147.4,642.1 150.1,641.2 152.5,641.1 154.7,640.5 156.8,639.4 158.8,638.8 160.7,638.5 162.7,637.6 164.8,636.9 167.0,636.2 168.9,636.1 170.9,636.2 172.8,635.6 174.8,636.1 176.8,635.5 178.9,636.0 180.9,635.5 182.9,636.0 185.0,635.8 187.0,635.7 189.0,635.7 191.0,635.9 193.1,636.0 195.2,635.9 197.3,635.9 199.4,636.4 201.5,637.0 203.5,636.9 205.5,636.6 207.5,637.4 209.3,637.4 211.0,637.6 213.6,636.9 216.0,637.2 218.3,636.4 220.4,636.7 222.4,636.1 224.1,635.7 225.6,636.0 228.3,634.0 230.5,633.5 232.0,634.1 233.6,634.1 236.0,634.7 240.3,635.5 241.7,635.1 243.2,635.3 244.9,634.6 246.7,634.8 248.7,634.5 250.7,634.8 252.8,634.2 255.0,634.8 257.2,633.8 259.4,634.2 261.7,633.4 263.9,633.4 266.2,633.8 268.4,633.0 270.5,632.8 272.6,633.1 274.6,632.7 276.8,632.2 279.0,632.9 281.3,631.9 283.5,631.6 285.7,631.6 288.0,631.6 290.2,631.5 292.4,630.7 294.5,630.7 296.6,630.2 298.7,630.4 300.7,630.5 302.7,630.3 304.6,630.4 306.4,630.1 308.8,630.2 311.2,630.0 313.4,629.8 315.6,629.7 317.8,630.2 319.8,630.0 321.7,629.9 323.6,630.3 325.3,630.7 326.9,630.0 328.4,630.4 331.5,629.7 333.4,629.0 335.3,627.8 338.1,627.8 339.9,627.0 341.9,627.1 344.1,626.7 346.4,626.2 348.8,626.5 351.2,626.0 353.5,625.8 355.7,625.8 357.7,625.9 360.1,626.0 362.5,626.7 364.7,626.9 366.9,627.7 368.9,628.0 370.7,628.3 372.4,627.7 375.2,627.5 377.2,626.6 380.0,626.1 381.6,625.8 383.4,625.6 385.2,625.1 387.2,624.3 389.4,624.1 391.8,623.9 394.5,623.3 396.2,623.2 398.0,623.5 399.9,623.2 401.9,623.8 404.0,623.3 406.1,623.2 408.2,623.3 410.4,623.4 412.6,623.4 414.7,623.7 416.8,623.7 418.9,623.5 421.0,623.8 423.1,623.4 425.4,624.0 427.6,624.0 429.8,623.7 432.1,623.4 434.2,623.4 436.3,623.4 438.3,622.8 440.2,623.1 441.9,623.1 443.4,622.7 446.7,622.3 448.6,622.6 450.4,621.8 453.2,621.8 455.0,622.2 457.1,622.0 459.3,621.9 461.7,622.7 464.2,622.3 466.6,622.2 468.8,622.9 470.9,622.5 472.7,622.8 475.9,623.3 478.5,623.0 480.6,622.4 482.5,623.0 484.7,624.8 487.4,626.2 489.0,625.7 490.9,625.5 493.0,624.3 495.2,623.6 497.5,622.9 499.8,622.7 502.0,621.4 504.1,621.6 506.3,620.8 508.4,620.8 510.6,620.4 512.7,620.4 514.7,620.8 516.7,620.9 518.9,621.7 521.0,623.3 523.0,625.1 525.0,627.5 527.0,628.7 529.0,629.5 531.0,628.9 533.0,627.2 535.0,626.3 537.0,624.7 539.1,623.1 541.2,621.8 543.4,620.9 545.7,620.3 548.0,620.1 550.3,619.5 552.5,619.5 554.6,619.5 557.0,620.3 559.3,621.1 561.6,622.5 563.7,623.6 565.6,624.0 568.0,624.9 569.9,625.8 573.0,626.0 574.8,626.2 576.9,626.3 579.2,626.4 581.7,626.0 584.2,626.0 586.5,625.2 588.5,625.4 590.1,625.9 593.1,626.2 595.0,626.6 596.8,624.6 598.7,621.9 600.9,620.1 603.5,619.5 605.4,619.6 607.6,620.8 609.9,623.0 612.2,625.0 614.6,627.2 617.0,628.1 619.0,627.8 621.0,627.2 623.1,625.8 625.2,625.0 627.3,624.3 629.5,623.4 631.7,622.6 633.8,623.4 635.9,624.3 638.2,624.8 640.4,626.5 642.6,627.3 644.8,628.7 646.9,629.4 648.8,630.7 651.1,631.3 653.2,631.7 655.2,631.8 657.1,632.4 659.0,632.3 661.0,632.9 663.0,633.0 664.8,632.0 666.7,631.8 668.7,631.3 670.8,631.0 673.3,631.3 675.2,631.8 677.2,632.1 679.4,632.6 681.7,633.8 684.1,633.9 686.4,635.0 688.7,635.6 690.8,636.1 692.8,636.3 695.2,635.6 697.4,635.5 699.5,634.6 701.5,634.0 703.5,633.5 705.5,632.4 707.5,631.2 709.9,630.9 712.4,630.4 714.9,629.9 717.2,629.1 719.3,628.9 721.0,628.0 723.6,630.1 725.9,631.3 727.5,630.9 729.3,630.6 731.4,629.8 733.9,628.4 736.9,628.7 738.5,628.7 740.3,628.3 742.3,628.9 744.3,629.0 746.5,628.9 748.7,629.7 750.9,629.4 753.0,630.1 755.1,630.1 757.1,630.0 758.9,630.4 761.6,630.1 764.1,629.5 766.5,629.7 768.8,628.4 771.0,627.9 773.0,628.0 774.8,628.2 777.5,628.5 779.6,629.5 781.5,630.3 783.4,631.3 785.7,631.8 788.0,632.4 790.7,632.8 792.3,632.1 793.8,631.6 795.4,631.5 797.4,630.4 799.8,630.4 802.9,630.2 804.5,629.8 806.2,630.1 808.2,630.3 810.2,630.4 812.3,629.9 814.6,630.1 816.8,630.5 819.1,630.8 821.5,630.8 823.8,630.8 826.0,631.5 828.2,632.1 830.3,631.8 832.3,632.1 834.5,632.2 836.6,632.6 838.6,633.2 840.6,633.0 842.6,633.6 844.5,633.7 846.4,634.1 848.4,634.8 850.4,634.3 852.4,635.3 854.5,635.2 856.7,635.8 858.6,636.3 860.6,636.5 862.6,636.6 864.7,637.3 866.7,637.0 868.8,637.8 870.9,638.0 873.1,638.5 875.2,639.1 877.4,639.4 879.6,639.5 881.7,639.5 883.9,639.7 886.1,640.1 888.1,640.0 890.2,640.2 892.2,640.9 894.3,640.3 896.3,641.0 898.4,640.6 900.5,640.7 902.6,640.7 904.7,640.5 906.8,640.8 909.0,640.6 911.2,640.8 913.4,640.7 915.6,641.3 917.9,641.3 919.9,640.8 921.9,641.0 924.0,641.3 926.2,640.7 928.4,640.4 930.7,640.5 932.9,640.4 935.2,640.8 937.5,640.5 939.7,640.4 941.9,640.8 944.0,640.2 946.0,640.7 948.0,640.5 949.8,640.2 951.6,640.5 953.2,640.0 954.6,640.4 957.9,640.3 960.0,639.6 961.5,639.5 962.7,639.5 964.3,639.2 966.8,639.1 968.4,639.3 970.0,639.4 971.8,639.4 973.6,639.7 975.5,639.3 977.5,639.8 979.5,640.0 981.7,639.9 983.9,640.1 986.3,640.1 988.7,640.9 991.2,640.5 992.9,640.6 994.8,641.0 996.7,640.4 998.6,641.2 1000.6,640.4 1002.7,640.4 1004.8,640.7 1006.9,640.7 1009.1,641.2 1011.2,641.1 1013.4,641.0 1015.6,640.8 1017.7,640.9 1019.8,640.6 1021.9,641.1 1024.0,640.7 1026.0,640.7 1027.9,641.0 1030.0,640.6 1032.1,640.8 1034.1,641.4 1036.1,640.8 1038.1,640.9 1040.1,641.0 1042.0,641.1 1044.0,641.4 1045.9,641.3 1047.8,641.4 1049.8,641.4 1051.8,641.5 1053.8,641.9 1055.8,641.6 1057.9,641.7 1060.0,642.0 1061.9,641.4 1063.7,641.4 1065.5,642.0 1067.3,641.6 1069.0,641.8 1070.8,641.2 1072.6,641.5 1074.4,641.7 1076.2,641.1 1078.1,641.4 1080.1,641.2 1082.1,640.9 1084.3,641.4 1086.5,640.7 1088.8,640.7 1091.3,640.8 1093.9,640.5 1096.7,640.9 1098.3,640.7 1100.0,640.6 1101.7,640.6 1103.5,641.0 1105.4,641.0 1107.4,640.8 1109.4,640.4 1111.4,640.4 1113.5,640.5 1115.6,640.0 1117.8,640.1 1120.0,640.9 1122.2,640.1 1124.4,640.8 1126.6,640.5 1128.9,640.7 1131.1,640.0 1133.4,640.2 1135.6,640.6 1137.8,639.9 1140.0,640.0 1142.1,640.2 1144.3,640.1 1146.4,640.1 1148.4,640.6 1150.4,640.0 1152.4,640.9 1154.3,640.6 1156.1,640.1 1157.9,640.9 1159.6,640.3 1161.2,640.5 1162.7,640.7 1165.8,640.4 1168.6,640.8 1171.2,640.5 1173.5,640.8 1175.7,641.6 1177.6,641.7 1179.5,641.6 1181.3,641.9 1183.1,642.3 1184.8,641.8 1186.6,642.3 1188.4,642.2 1190.3,642.4 1192.3,642.6 1194.5,642.8 1196.4,642.9 1198.3,643.2 1200.2,643.5 1202.1,643.9 1204.0,644.3 1205.9,644.5 1207.9,644.5 1209.8,644.5 1211.8,645.1 1213.8,644.6 1215.8,644.7 1217.9,645.6 1220.0,645.6 1222.1,645.4 1224.3,645.7 1226.6,645.7 1228.9,646.0 1231.2,646.1 1233.0,646.2 1234.9,646.6 1236.8,646.7 1238.7,646.6 1240.7,646.6 1242.7,646.5 1244.7,647.0 1246.8,647.3 1248.9,646.6 1251.0,647.1 1253.1,647.2 1255.2,647.2 1257.3,646.7 1259.5,647.2 1261.6,646.9 1263.7,647.0 1265.8,647.3 1267.9,647.4 1270.0,647.5 1272.1,647.6 1274.1,647.6 1276.2,647.4 1278.1,647.1 1280.1,647.7 1282.2,647.8 1284.3,647.8 1286.5,647.6 1288.6,647.1 1290.7,647.3 1292.8,647.2 1295.0,647.7 1297.1,647.6 1299.2,647.3 1301.3,647.9 1303.3,647.9 1305.4,647.9 1307.4,647.4 1309.4,647.3 1311.3,647.2 1313.3,647.7 1315.2,647.6 1317.1,647.2 1318.9,647.8 1320.7,647.5 1322.4,647.4 1324.1,647.4 1326.7,647.8 1329.1,647.6 1331.5,647.9 1333.7,647.5 1335.9,648.1 1338.0,647.9 1340.0,648.5 1342.0,648.0 1344.0,648.2 1345.9,648.5 1347.8,648.5 1349.7,648.7 1351.6,649.0 1353.5,648.4 1355.7,648.9 1357.8,648.8 1359.9,648.8 1362.0,648.4 1364.0,648.3 1366.0,648.0 1367.9,648.0 1369.9,647.7 1371.9,647.5 1373.9,647.6 1375.9,647.3 1377.9,647.5 1380.0,647.5 1382.3,647.3 1384.7,647.1 1387.1,647.5 1389.6,647.7 1392.0,647.2 1394.3,647.5 1396.5,647.6 1398.5,647.8 1400.3,647.7 1401.8,647.3 1403.0,647.5" fill="none" stroke="#249a55" stroke-width="1.3"/>
</svg>
<div class="a" style="left:5px;top:656px;width:1426px;height:65px;background:#f6f6f6;border-top:1px solid #e4e4e4"></div>
<div class="a" style="left:30px;top:664px;width:1167px;height:14px;border:2px solid #d0d0d0;border-right:none;border-radius:4px 0 0 4px;background:#f2f2f2"></div>
<div class="a" style="left:1197px;top:664px;width:198px;height:14px;border-top:2px solid #007960;border-bottom:2px solid #007960;background:#fff"></div>
<div class="a" style="left:1194px;top:661px;width:5px;height:20px;border:1.7px solid #007960;background:#cfe6de;box-shadow:0 0 0 1px #fff"></div>
<div class="a" style="left:1392px;top:661px;width:5px;height:20px;border:1.7px solid #007960;background:#cfe6de;box-shadow:0 0 0 1px #fff"></div>
<svg class="a" style="left:1405px;top:665px" width="12" height="14"><rect x="0" y="0" width="5.6" height="14" fill="#007960"/><rect x="6.4" y="0" width="5.6" height="14" fill="#007960"/><path d="M0.6 8 L3.2 2 L4.7 11.5 L6.2 8 L9.2 2 L10.7 11.5 L12 8" fill="none" stroke="#dff0ea" stroke-width="1.1"/></svg>
<svg class="a" style="left:0;top:0" width="1431" height="720" font-family="Liberation Sans, sans-serif"><line x1="54.0" y1="677" x2="54.0" y2="681" stroke="#ccc"/><text x="54.0" y="691" text-anchor="middle" font-size="10" fill="#777">12:00 pm</text><line x1="151.4" y1="677" x2="151.4" y2="681" stroke="#ccc"/><text x="151.4" y="691" text-anchor="middle" font-size="10" fill="#777">Jul 18</text><line x1="248.8" y1="677" x2="248.8" y2="681" stroke="#ccc"/><text x="248.8" y="691" text-anchor="middle" font-size="10" fill="#777">12:00 pm</text><line x1="346.2" y1="677" x2="346.2" y2="681" stroke="#ccc"/><text x="346.2" y="691" text-anchor="middle" font-size="10" fill="#777">Jul 19</text><line x1="443.6" y1="677" x2="443.6" y2="681" stroke="#ccc"/><text x="443.6" y="691" text-anchor="middle" font-size="10" fill="#777">12:00 pm</text><line x1="541.0" y1="677" x2="541.0" y2="681" stroke="#ccc"/><text x="541.0" y="691" text-anchor="middle" font-size="10" fill="#777">Jul 20</text><line x1="638.4" y1="677" x2="638.4" y2="681" stroke="#ccc"/><text x="638.4" y="691" text-anchor="middle" font-size="10" fill="#777">12:00 pm</text><line x1="735.8" y1="677" x2="735.8" y2="681" stroke="#ccc"/><text x="735.8" y="691" text-anchor="middle" font-size="10" fill="#777">Jul 21</text><line x1="833.2" y1="677" x2="833.2" y2="681" stroke="#ccc"/><text x="833.2" y="691" text-anchor="middle" font-size="10" fill="#777">12:00 pm</text><line x1="930.6" y1="677" x2="930.6" y2="681" stroke="#ccc"/><text x="930.6" y="691" text-anchor="middle" font-size="10" fill="#777">Jul 22</text><line x1="1028.0" y1="677" x2="1028.0" y2="681" stroke="#ccc"/><text x="1028.0" y="691" text-anchor="middle" font-size="10" fill="#777">12:00 pm</text><line x1="1125.4" y1="677" x2="1125.4" y2="681" stroke="#ccc"/><text x="1125.4" y="691" text-anchor="middle" font-size="10" fill="#777">Jul 23</text><line x1="1222.8" y1="677" x2="1222.8" y2="681" stroke="#ccc"/><text x="1222.8" y="691" text-anchor="middle" font-size="10" fill="#777">12:00 pm</text><line x1="1320.2" y1="677" x2="1320.2" y2="681" stroke="#ccc"/><text x="1320.2" y="691" text-anchor="middle" font-size="10" fill="#777">Jul 24</text></svg>
<svg class="a" style="left:0;top:0" width="40" height="720"><path d="M17 715 H19.4 V707 H22.8 L18.2 700.6 L13.6 707 H17 Z" fill="#007960"/></svg>
<div class="t" style="left:31px;top:705px;font-size:11.3px;color:#007960">7/17/2019</div>
<div class="t" style="left:706px;top:705px;font-size:11.3px;color:#007960">7 days</div>
<div class="t" style="left:1365px;top:705px;font-size:11.3px;color:#007960">7/24/2019</div>

<!-- details panel -->
<div class="a" style="left:5px;top:721px;width:1103px;height:26px;background:#007960"></div>
<svg class="a" style="left:0;top:0" width="40" height="745"><rect x="14.7" y="727.5" width="1.3" height="11.2" fill="#fff"/><rect x="14.7" y="737.4" width="15.3" height="1.3" fill="#fff"/><path d="M16.6 736.8 L17.2 730.6 L19 728.3 L23 732.4 L26.6 729.2 L28.8 736.8 Z" fill="#fff"/></svg>
<div class="t" style="left:33px;top:728px;font-size:12px;font-weight:bold;color:#fff">Details</div>
<div class="t" style="left:974px;top:728px;font-size:11.6px;font-weight:bold;color:#fff">Jul 23, 2019 12:26 PM</div>
<div class="a" style="left:1108px;top:721px;width:8px;height:187px;background:#f4f4f4;border-left:1px solid #d8d8d8;border-right:1px solid #d8d8d8"></div>
<!-- header row -->
<div class="a" style="left:5px;top:772px;width:1103px;height:2px;background:#dedede"></div>
<div class="t" style="left:169px;top:755px;font-size:12px;color:#222">Name</div>
<div class="t" style="left:882px;top:755px;font-size:12px;color:#222">Color</div>
<div class="t" style="left:934px;top:755px;font-size:11.6px;color:#222">Assets</div>
<div class="t" style="left:976px;top:755px;font-size:12px;color:#007960">Lane</div>
<svg class="a" style="left:0;top:739.3px" width="1108" height="168">
 <path d="M82 17 L89.2 24.2 M89.2 17 L82 24.2" stroke="#777" stroke-width="2.8"/>
 <rect x="101.5" y="15.5" width="10" height="10" rx="1.5" fill="#fff" stroke="#333" stroke-width="1.1"/>
 <path d="M150 20 L153.7 15.5 L157.4 20 Z M150 21.5 L153.7 26 L157.4 21.5 Z" fill="#777"/>
 <path d="M209 20 L212.7 15.5 L216.4 20 Z M209 21.5 L212.7 26 L216.4 21.5 Z" fill="#777"/>
 <path d="M920 20 L923.7 15.5 L927.4 20 Z M920 21.5 L923.7 26 L927.4 21.5 Z" fill="#777"/>
 <path d="M1010.5 20.5 L1014.7 15.5 L1019 20.5 Z" fill="#007960"/>
</svg>
<div class="a" style="left:5px;top:774px;width:1103px;height:23px;background:#f9f9f9;border-bottom:1px solid #e0e0e0"></div><div class="t" style="left:145px;top:779px;font-size:12px;color:#222">°F</div><div class="t" style="left:169px;top:779px;font-size:12.5px;color:#222">Temperature</div><div class="a" style="left:898px;top:778px;width:15px;height:15px;background:#4a55a6;border:1px solid #222"></div><div class="t" style="left:934px;top:779px;font-size:12px;color:#007960;text-decoration:underline">Area A</div><div class="t" style="left:1010px;top:779px;font-size:12px;color:#222">1</div><div class="t" style="right:326px;top:779px;font-size:12px;color:#4a56a6">85.739</div><div class="a" style="left:5px;top:797px;width:1103px;height:23px;background:#fff;border-bottom:1px solid #e0e0e0"></div><div class="t" style="left:145px;top:802px;font-size:12px;color:#222">°F</div><div class="t" style="left:169px;top:802px;font-size:12.5px;color:#222">Wet Bulb</div><div class="a" style="left:898px;top:801px;width:15px;height:15px;background:#0e8a3c;border:1px solid #222"></div><div class="t" style="left:934px;top:802px;font-size:12px;color:#007960;text-decoration:underline">Area A</div><div class="t" style="left:1010px;top:802px;font-size:12px;color:#222">2</div><div class="t" style="right:326px;top:802px;font-size:12px;color:#1a8a4a">72.737</div><div class="a" style="left:5px;top:820px;width:1103px;height:23px;background:#f9f9f9;border-bottom:1px solid #e0e0e0"></div><div class="t" style="left:145px;top:825px;font-size:12px;color:#222">kW</div><div class="t" style="left:169px;top:825px;font-size:12.5px;color:#222">Compressor Power</div><div class="a" style="left:898px;top:824px;width:15px;height:15px;background:#3e9180;border:1px solid #222"></div><div class="t" style="left:934px;top:825px;font-size:12px;color:#007960;text-decoration:underline">Area A</div><div class="t" style="left:1010px;top:825px;font-size:12px;color:#222">3</div><div class="a" style="left:5px;top:843px;width:1103px;height:23px;background:#fff;border-bottom:1px solid #e0e0e0"></div><div class="t" style="left:145px;top:848px;font-size:12px;color:#222">%</div><div class="t" style="left:169px;top:848px;font-size:12.5px;color:#222">Relative Humidity</div><div class="a" style="left:898px;top:847px;width:15px;height:15px;background:#00aeef;border:1px solid #222"></div><div class="t" style="left:934px;top:848px;font-size:12px;color:#007960;text-decoration:underline">Area A</div><div class="t" style="left:1010px;top:848px;font-size:12px;color:#222">4</div><div class="a" style="left:5px;top:866px;width:1103px;height:22px;background:#f9f9f9;"></div><div class="t" style="left:169px;top:871px;font-size:12.5px;color:#222">mid power</div><div class="a" style="left:898px;top:870px;width:15px;height:15px;background:#9b248f;border:1px solid #222"></div><div class="t" style="left:934px;top:871px;font-size:12px;color:#007960;text-decoration:underline">Area A</div><svg class="a" style="left:0;top:0" width="1108" height="908"><g transform="translate(41,784.5)"><path d="M6 -5.6 L5.6 -2.4 L2.2 1.2 L1.5 4.5 L-1.2 6 L-1.6 3.2 L-3 1.8 L-6 1 L-4.6 -1.4 L-1.4 -2 L2.4 -5.2 Z" fill="#007960"/><circle cx="3.8" cy="-3.4" r="0.9" fill="#d8ece6"/></g><g transform="translate(65.5,784.5)"><circle r="5.6" fill="#007960"/><path d="M-1.8 -1.4 H0.9 V2.6 H1.8 V3.6 H-1.8 V2.6 H-0.9 V-0.4 H-1.8 Z" fill="#fff"/><circle cx="0" cy="-3" r="1" fill="#fff"/></g><path transform="translate(85.6,784.5)" d="M-3.6 -3.6 L3.6 3.6 M3.6 -3.6 L-3.6 3.6" stroke="#007960" stroke-width="2.8"/><rect x="101.5" y="779.5" width="10" height="10" rx="1.5" fill="#fff" stroke="#333" stroke-width="1.1"/><path transform="translate(0,775.2)" d="M124.4 10.7 L126.6 2.3 L129.3 12.1 L131.8 5.3 L134.5 15.3 L137.1 10.4 L137.6 12.3" fill="none" stroke="#4a55a6" stroke-width="1.7" stroke-linejoin="round"/><g transform="translate(41,807.5)"><path d="M6 -5.6 L5.6 -2.4 L2.2 1.2 L1.5 4.5 L-1.2 6 L-1.6 3.2 L-3 1.8 L-6 1 L-4.6 -1.4 L-1.4 -2 L2.4 -5.2 Z" fill="#007960"/><circle cx="3.8" cy="-3.4" r="0.9" fill="#d8ece6"/></g><g transform="translate(65.5,807.5)"><circle r="5.6" fill="#007960"/><path d="M-1.8 -1.4 H0.9 V2.6 H1.8 V3.6 H-1.8 V2.6 H-0.9 V-0.4 H-1.8 Z" fill="#fff"/><circle cx="0" cy="-3" r="1" fill="#fff"/></g><path transform="translate(85.6,807.5)" d="M-3.6 -3.6 L3.6 3.6 M3.6 -3.6 L-3.6 3.6" stroke="#007960" stroke-width="2.8"/><rect x="101.5" y="802.5" width="10" height="10" rx="1.5" fill="#fff" stroke="#333" stroke-width="1.1"/><path transform="translate(0,798.2)" d="M124.4 10.7 L126.6 2.3 L129.3 12.1 L131.8 5.3 L134.5 15.3 L137.1 10.4 L137.6 12.3" fill="none" stroke="#0e8a3c" stroke-width="1.7" stroke-linejoin="round"/><g transform="translate(41,830.5)"><path d="M6 -5.6 L5.6 -2.4 L2.2 1.2 L1.5 4.5 L-1.2 6 L-1.6 3.2 L-3 1.8 L-6 1 L-4.6 -1.4 L-1.4 -2 L2.4 -5.2 Z" fill="#007960"/><circle cx="3.8" cy="-3.4" r="0.9" fill="#d8ece6"/></g><g transform="translate(65.5,830.5)"><circle r="5.6" fill="#007960"/><path d="M-1.8 -1.4 H0.9 V2.6 H1.8 V3.6 H-1.8 V2.6 H-0.9 V-0.4 H-1.8 Z" fill="#fff"/><circle cx="0" cy="-3" r="1" fill="#fff"/></g><path transform="translate(85.6,830.5)" d="M-3.6 -3.6 L3.6 3.6 M3.6 -3.6 L-3.6 3.6" stroke="#007960" stroke-width="2.8"/><rect x="101.5" y="825.5" width="10" height="10" rx="1.5" fill="#fff" stroke="#333" stroke-width="1.1"/><path transform="translate(0,821.2)" d="M124.4 10.7 L126.6 2.3 L129.3 12.1 L131.8 5.3 L134.5 15.3 L137.1 10.4 L137.6 12.3" fill="none" stroke="#3e9180" stroke-width="1.7" stroke-linejoin="round"/><g transform="translate(41,853.5)"><path d="M6 -5.6 L5.6 -2.4 L2.2 1.2 L1.5 4.5 L-1.2 6 L-1.6 3.2 L-3 1.8 L-6 1 L-4.6 -1.4 L-1.4 -2 L2.4 -5.2 Z" fill="#007960"/><circle cx="3.8" cy="-3.4" r="0.9" fill="#d8ece6"/></g><g transform="translate(65.5,853.5)"><circle r="5.6" fill="#007960"/><path d="M-1.8 -1.4 H0.9 V2.6 H1.8 V3.6 H-1.8 V2.6 H-0.9 V-0.4 H-1.8 Z" fill="#fff"/><circle cx="0" cy="-3" r="1" fill="#fff"/></g><path transform="translate(85.6,853.5)" d="M-3.6 -3.6 L3.6 3.6 M3.6 -3.6 L-3.6 3.6" stroke="#007960" stroke-width="2.8"/><rect x="101.5" y="848.5" width="10" height="10" rx="1.5" fill="#fff" stroke="#333" stroke-width="1.1"/><path transform="translate(0,844.2)" d="M124.4 10.7 L126.6 2.3 L129.3 12.1 L131.8 5.3 L134.5 15.3 L137.1 10.4 L137.6 12.3" fill="none" stroke="#00aeef" stroke-width="1.7" stroke-linejoin="round"/><g transform="translate(41,876.5)"><path d="M6 -5.6 L5.6 -2.4 L2.2 1.2 L1.5 4.5 L-1.2 6 L-1.6 3.2 L-3 1.8 L-6 1 L-4.6 -1.4 L-1.4 -2 L2.4 -5.2 Z" fill="#007960"/><circle cx="3.8" cy="-3.4" r="0.9" fill="#d8ece6"/></g><g transform="translate(65.5,876.5)"><circle r="5.6" fill="#007960"/><path d="M-1.8 -1.4 H0.9 V2.6 H1.8 V3.6 H-1.8 V2.6 H-0.9 V-0.4 H-1.8 Z" fill="#fff"/><circle cx="0" cy="-3" r="1" fill="#fff"/></g><path transform="translate(85.6,876.5)" d="M-3.6 -3.6 L3.6 3.6 M3.6 -3.6 L-3.6 3.6" stroke="#007960" stroke-width="2.8"/><rect x="101.5" y="871.5" width="10" height="10" rx="1.5" fill="#fff" stroke="#333" stroke-width="1.1"/><g transform="translate(0,0)"><rect x="125.1" y="868" width="5.3" height="13.8" fill="#9b248f"/><rect x="131.2" y="868" width="5.8" height="13.8" fill="#9b248f"/><path d="M125.3 877.5 L127.3 869.7 L129.7 880 L131.2 874.6 L134.1 869.7 L135.9 880 L137 878" fill="none" stroke="#f4eef4" stroke-width="1.1"/></g><g transform="translate(10,872)" fill="none" stroke="#007960" stroke-width="1"><path d="M1 2.5 H6 M1 2.5 V11 H9.5 V6.5"/><path d="M4.5 8 L5 6 L10.5 0.5 L12 2 L6.5 7.5 Z"/></g></svg>
<!-- resize handle -->
<div class="a" style="left:1110px;top:868.5px;width:1px;height:8px;background:#666"></div>
<div class="a" style="left:1112px;top:868.5px;width:1px;height:8px;background:#666"></div>

<!-- capsules panel -->
<div class="a" style="left:1116px;top:721px;width:315px;height:26px;background:#007960"></div>
<svg class="a" style="left:1127px;top:724px" width="12" height="15"><path d="M3 1 H1 V14 H3 M9 1 H11 V14 H9" fill="none" stroke="#fff" stroke-width="1.3"/><path d="M3.5 11.5 L4.5 3 L6 9 L7.5 3 L8.5 11.5" fill="none" stroke="#fff" stroke-width="1.1"/></svg>
<div class="t" style="left:1143px;top:728px;font-size:11.4px;font-weight:bold;color:#fff">Capsules</div>
<div class="a" style="left:1385px;top:723px;width:44px;height:22px;background:#fff;border-radius:3px;border:1px solid #ddd"></div>
<div class="a" style="left:1408px;top:724px;width:1px;height:20px;background:#ddd"></div>
<svg class="a" style="left:1385px;top:723px" width="46" height="22">
 <circle cx="10.5" cy="9.5" r="4.3" fill="none" stroke="#222" stroke-width="1.5"/><path d="M13.5 12.5 L17.5 16.5" stroke="#222" stroke-width="2"/><path d="M8.2 9.5 H12.8 M10.5 7.2 V11.8" stroke="#222" stroke-width="1.1"/>
 <rect x="28.5" y="6.5" width="9" height="9" rx="1.5" fill="none" stroke="#999"/><path d="M30.5 11 H35.5" stroke="#999"/>
</svg>
<div class="a" style="left:1116px;top:777px;width:315px;height:2px;background:#dedede"></div>
<div class="a" style="left:1116px;top:779px;width:315px;height:23px;background:#f9f9f9;border-bottom:1px solid #e0e0e0"></div>
<div class="t" style="left:1166px;top:760px;font-size:12.6px;color:#007960">Start</div>
<div class="t" style="left:1166px;top:784px;font-size:12px;color:#222">Jul 23, 2019 11:09 AM</div>
<div class="t" style="left:1166px;top:807px;font-size:12px;color:#222">Jul 23, 2019 2:53 PM</div>
<svg class="a" style="left:1116px;top:740px" width="315" height="100">
 <rect x="6.5" y="20.5" width="10" height="10" rx="1.5" fill="#fff" stroke="#333" stroke-width="1.1"/>
 <rect x="6.5" y="44.5" width="10" height="10" rx="1.5" fill="#fff" stroke="#333" stroke-width="1.1"/>
 <rect x="6.5" y="67.5" width="10" height="10" rx="1.5" fill="#fff" stroke="#333" stroke-width="1.1"/>
 <path d="M85.5 25 L89.5 20.5 L93.5 25 Z" fill="#007960"/>
 <g fill="none" stroke="#9b248f" stroke-width="1.1"><path d="M33 42 H31.5 V55 H33 M38.5 42 H40 V55 H38.5 M33.5 52 L34.5 44 L35.8 50 L37 44 L38 52"/><path d="M33 65 H31.5 V78 H33 M38.5 65 H40 V78 H38.5 M33.5 75 L34.5 67 L35.8 73 L37 67 L38 75"/></g>
 <line x1="217.5" y1="9" x2="217.5" y2="35" stroke="#ddd"/>
 <g fill="none" stroke="#222" stroke-width="0.9"><rect x="191.5" y="16.5" width="10.5" height="9"/><path d="M191.5 19.5 H202 M191.5 22.5 H202 M195 16.5 V25.5 M198.5 16.5 V25.5"/></g><circle cx="201" cy="23" r="4.4" fill="#222" stroke="#fff" stroke-width="0.8"/><path d="M198.6 23 H203.4 M201 20.6 V25.4" stroke="#fff" stroke-width="1.5"/>
 <g fill="none" stroke="#4a56a6" stroke-width="0.9"><rect x="236.5" y="16.5" width="10.5" height="9"/><path d="M236.5 19.5 H247 M236.5 22.5 H247 M240 16.5 V25.5 M243.5 16.5 V25.5"/></g><circle cx="246" cy="23" r="4.4" fill="#4a56a6" stroke="#fff" stroke-width="0.8"/><path d="M243.6 23 H248.4 M246 20.6 V25.4" stroke="#fff" stroke-width="1.5"/>
 <g fill="none" stroke="#0e8a3c" stroke-width="0.9"><rect x="268.5" y="16.5" width="10.5" height="9"/><path d="M268.5 19.5 H279 M268.5 22.5 H279 M272 16.5 V25.5 M275.5 16.5 V25.5"/></g><circle cx="278" cy="23" r="4.4" fill="#0e8a3c" stroke="#fff" stroke-width="0.8"/><path d="M275.6 23 H280.4 M278 20.6 V25.4" stroke="#fff" stroke-width="1.5"/>
 <g fill="none" stroke="#3e9180" stroke-width="0.9"><rect x="300.5" y="16.5" width="10.5" height="9"/><path d="M300.5 19.5 H311 M300.5 22.5 H311 M304 16.5 V25.5 M307.5 16.5 V25.5"/></g><circle cx="310" cy="23" r="4.4" fill="#3e9180" stroke="#fff" stroke-width="0.8"/><path d="M307.6 23 H312.4 M310 20.6 V25.4" stroke="#fff" stroke-width="1.5"/>
</svg>

<!-- left strip -->
<div class="a" style="left:0;top:8px;width:4px;height:900px;background:#dedede"></div>
<div class="a" style="left:4px;top:8px;width:1px;height:900px;background:#9a9a9a"></div>
<svg class="a" style="left:0;top:512px" width="4" height="10"><path d="M3.5 1.5 L0.5 5 L3.5 8.5" fill="none" stroke="#555" stroke-width="1"/></svg>
</body></html>
